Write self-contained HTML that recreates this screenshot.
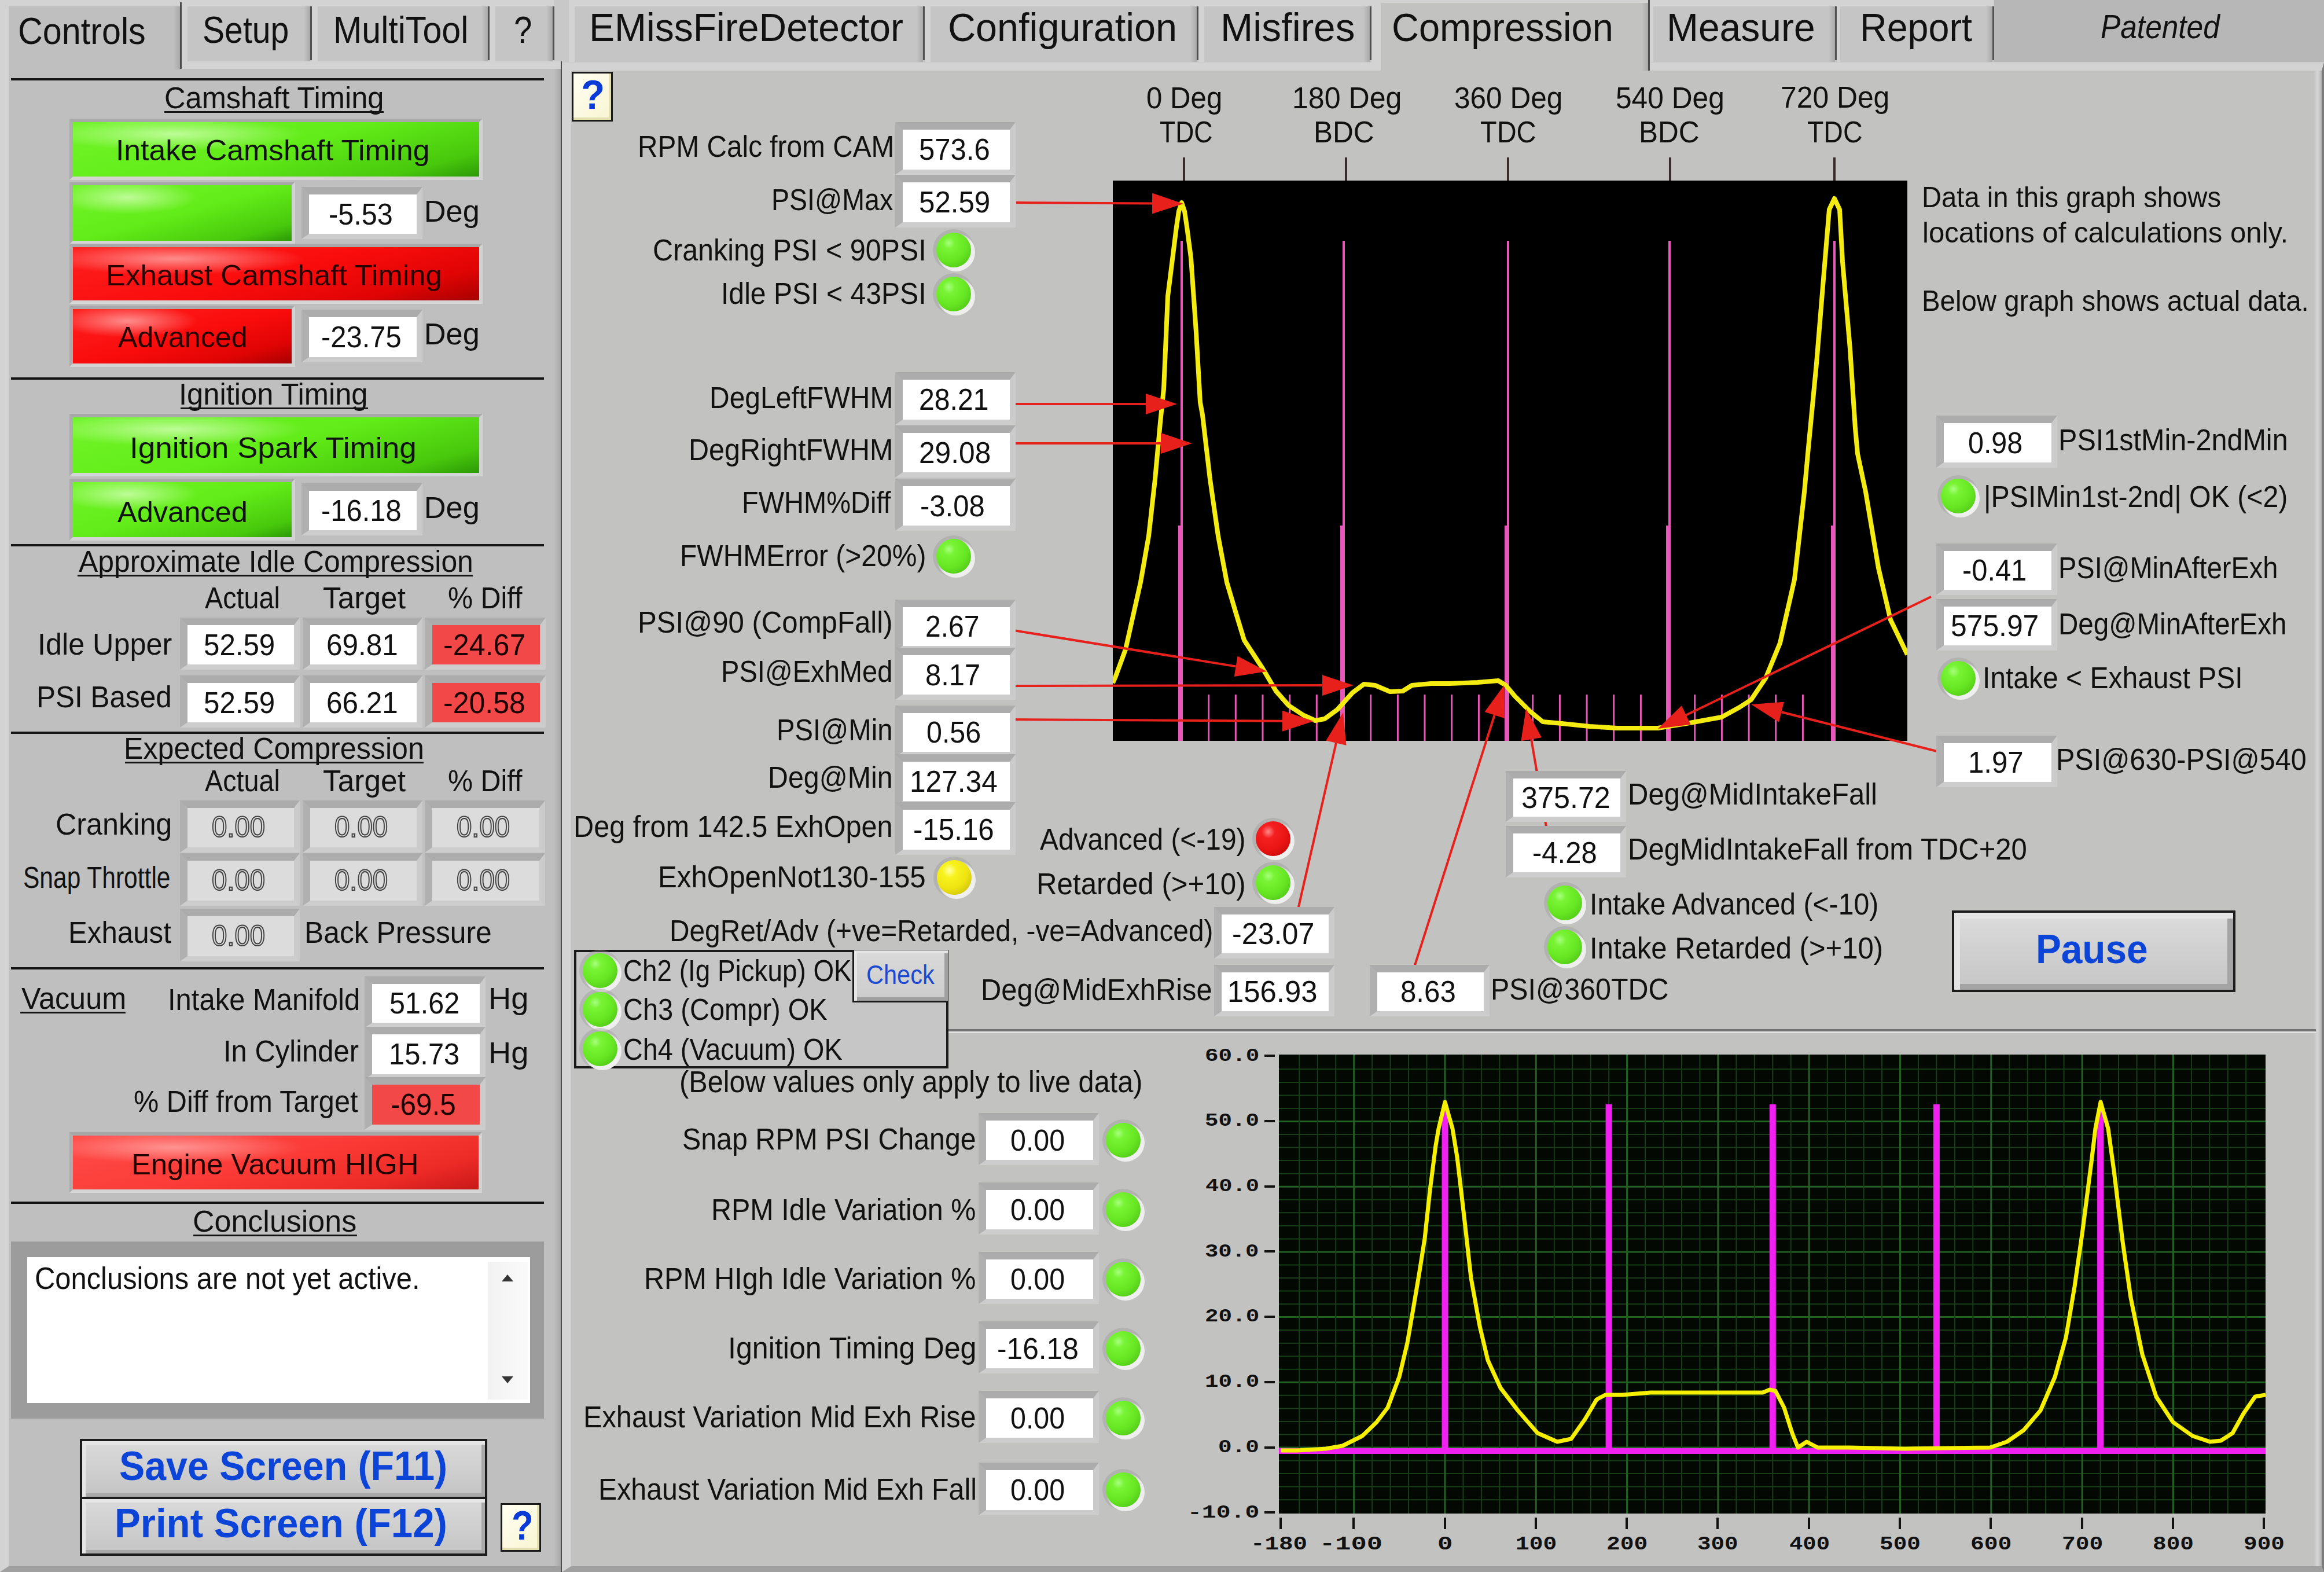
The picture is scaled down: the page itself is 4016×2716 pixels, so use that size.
<!DOCTYPE html>
<html><head><meta charset="utf-8"><style>
html,body{margin:0;padding:0;}
body{width:4016px;height:2716px;overflow:hidden;position:relative;background:#c2c2c1;font-family:"Liberation Sans",sans-serif;}
div,span,svg{position:absolute;box-sizing:border-box;}
span{white-space:pre;line-height:1;}
</style></head><body>
<div style="left:0px;top:0px;width:4016px;height:108px;background:#c8c8c8;"></div>
<div style="left:3446px;top:0px;width:570px;height:107px;background:#b7b7b7;"></div>
<div style="left:314px;top:0px;width:225px;height:107px;background:#c5c5c5;border-top:11px solid #d3d3d3;border-left:10px solid #d3d3d3;"></div>
<div style="left:525px;top:11px;width:11px;height:96px;background:linear-gradient(90deg,rgba(160,160,160,0),rgba(150,150,150,.6));"></div>
<div style="left:536px;top:11px;width:3px;height:93px;background:#505050;"></div>
<div style="left:539px;top:0px;width:307px;height:107px;background:#c5c5c5;border-top:11px solid #d3d3d3;border-left:10px solid #d3d3d3;"></div>
<div style="left:832px;top:11px;width:11px;height:96px;background:linear-gradient(90deg,rgba(160,160,160,0),rgba(150,150,150,.6));"></div>
<div style="left:843px;top:11px;width:3px;height:93px;background:#505050;"></div>
<div style="left:846px;top:0px;width:112px;height:107px;background:#c5c5c5;border-top:11px solid #d3d3d3;border-left:10px solid #d3d3d3;"></div>
<div style="left:944px;top:11px;width:11px;height:96px;background:linear-gradient(90deg,rgba(160,160,160,0),rgba(150,150,150,.6));"></div>
<div style="left:955px;top:11px;width:3px;height:93px;background:#505050;"></div>
<div style="left:983px;top:0px;width:615px;height:107px;background:#c5c5c5;border-top:11px solid #d3d3d3;border-left:10px solid #d3d3d3;"></div>
<div style="left:1584px;top:11px;width:11px;height:96px;background:linear-gradient(90deg,rgba(160,160,160,0),rgba(150,150,150,.6));"></div>
<div style="left:1595px;top:11px;width:3px;height:93px;background:#505050;"></div>
<div style="left:1598px;top:0px;width:473px;height:107px;background:#c5c5c5;border-top:11px solid #d3d3d3;border-left:10px solid #d3d3d3;"></div>
<div style="left:2057px;top:11px;width:11px;height:96px;background:linear-gradient(90deg,rgba(160,160,160,0),rgba(150,150,150,.6));"></div>
<div style="left:2068px;top:11px;width:3px;height:93px;background:#505050;"></div>
<div style="left:2071px;top:0px;width:299px;height:107px;background:#c5c5c5;border-top:11px solid #d3d3d3;border-left:10px solid #d3d3d3;"></div>
<div style="left:2356px;top:11px;width:11px;height:96px;background:linear-gradient(90deg,rgba(160,160,160,0),rgba(150,150,150,.6));"></div>
<div style="left:2367px;top:11px;width:3px;height:93px;background:#505050;"></div>
<div style="left:2851px;top:0px;width:323px;height:107px;background:#c5c5c5;border-top:11px solid #d3d3d3;border-left:6px solid #d3d3d3;"></div>
<div style="left:3160px;top:11px;width:11px;height:96px;background:linear-gradient(90deg,rgba(160,160,160,0),rgba(150,150,150,.6));"></div>
<div style="left:3171px;top:11px;width:3px;height:93px;background:#505050;"></div>
<div style="left:3174px;top:0px;width:272px;height:107px;background:#c5c5c5;border-top:11px solid #d3d3d3;border-left:6px solid #d3d3d3;"></div>
<div style="left:3432px;top:11px;width:11px;height:96px;background:linear-gradient(90deg,rgba(160,160,160,0),rgba(150,150,150,.6));"></div>
<div style="left:3443px;top:11px;width:3px;height:93px;background:#505050;"></div>
<div style="left:0px;top:106px;width:971px;height:2610px;background:#bfbfbf;border-top:13px solid #d3d3d3;border-left:15px solid #d3d3d3;border-bottom:10px solid #a0a0a0;"></div>
<div style="left:957px;top:119px;width:12px;height:2587px;background:linear-gradient(90deg,rgba(150,150,150,0),rgba(150,150,150,.55));"></div>
<div style="left:969px;top:106px;width:2px;height:2610px;background:#4c4c4c;"></div>
<div style="left:0px;top:0px;width:314px;height:120px;background:#bfbfbf;border-top:11px solid #d3d3d3;border-left:15px solid #d3d3d3;"></div>
<div style="left:15px;top:106px;width:299px;height:14px;background:#bfbfbf;"></div>
<div style="left:300px;top:11px;width:11px;height:109px;background:linear-gradient(90deg,rgba(150,150,150,0),rgba(150,150,150,.55));"></div>
<div style="left:311px;top:4px;width:3px;height:115px;background:#4c4c4c;"></div>
<div style="left:971px;top:108px;width:3045px;height:2608px;background:#c2c2c1;border-top:14px solid #d3d3d3;border-left:16px solid #d3d3d3;border-right:4px solid #7c7c7c;border-bottom:10px solid #a0a0a0;"></div>
<div style="left:3998px;top:122px;width:14px;height:2584px;background:linear-gradient(90deg,rgba(210,210,210,0),#d6d6d6 50%,#b4b4b4);"></div>
<div style="left:2370px;top:0px;width:481px;height:122px;background:#c2c2c1;border-top:5px solid #d3d3d3;border-left:16px solid #d3d3d3;"></div>
<div style="left:2386px;top:108px;width:465px;height:16px;background:#c2c2c1;"></div>
<div style="left:2837px;top:5px;width:11px;height:117px;background:linear-gradient(90deg,rgba(150,150,150,0),rgba(150,150,150,.55));"></div>
<div style="left:2848px;top:0px;width:3px;height:122px;background:#4c4c4c;"></div>
<svg style="left:1923px;top:312px" width="1373" height="968" viewBox="0 0 1373 968"><rect x="0" y="0" width="1373" height="968" fill="#000"/><line x1="119" y1="104" x2="119" y2="968" stroke="#e858b8" stroke-width="4"/><line x1="117" y1="596" x2="117" y2="968" stroke="#e858b8" stroke-width="8"/><line x1="399" y1="104" x2="399" y2="968" stroke="#e858b8" stroke-width="4"/><line x1="397" y1="596" x2="397" y2="968" stroke="#e858b8" stroke-width="8"/><line x1="683" y1="104" x2="683" y2="968" stroke="#e858b8" stroke-width="4"/><line x1="681" y1="596" x2="681" y2="968" stroke="#e858b8" stroke-width="8"/><line x1="962" y1="104" x2="962" y2="968" stroke="#e858b8" stroke-width="4"/><line x1="960" y1="596" x2="960" y2="968" stroke="#e858b8" stroke-width="8"/><line x1="1247" y1="104" x2="1247" y2="968" stroke="#e858b8" stroke-width="4"/><line x1="1245" y1="596" x2="1245" y2="968" stroke="#e858b8" stroke-width="8"/><line x1="165.7" y1="888" x2="165.7" y2="968" stroke="#e858b8" stroke-width="3"/><line x1="212.3" y1="888" x2="212.3" y2="968" stroke="#e858b8" stroke-width="3"/><line x1="259.0" y1="888" x2="259.0" y2="968" stroke="#e858b8" stroke-width="3"/><line x1="305.7" y1="888" x2="305.7" y2="968" stroke="#e858b8" stroke-width="3"/><line x1="352.3" y1="888" x2="352.3" y2="968" stroke="#e858b8" stroke-width="3"/><line x1="445.7" y1="888" x2="445.7" y2="968" stroke="#e858b8" stroke-width="3"/><line x1="492.4" y1="888" x2="492.4" y2="968" stroke="#e858b8" stroke-width="3"/><line x1="539.0" y1="888" x2="539.0" y2="968" stroke="#e858b8" stroke-width="3"/><line x1="585.7" y1="888" x2="585.7" y2="968" stroke="#e858b8" stroke-width="3"/><line x1="632.4" y1="888" x2="632.4" y2="968" stroke="#e858b8" stroke-width="3"/><line x1="725.7" y1="888" x2="725.7" y2="968" stroke="#e858b8" stroke-width="3"/><line x1="772.4" y1="888" x2="772.4" y2="968" stroke="#e858b8" stroke-width="3"/><line x1="819.1" y1="888" x2="819.1" y2="968" stroke="#e858b8" stroke-width="3"/><line x1="865.7" y1="888" x2="865.7" y2="968" stroke="#e858b8" stroke-width="3"/><line x1="912.4" y1="888" x2="912.4" y2="968" stroke="#e858b8" stroke-width="3"/><line x1="1005.7" y1="888" x2="1005.7" y2="968" stroke="#e858b8" stroke-width="3"/><line x1="1052.4" y1="888" x2="1052.4" y2="968" stroke="#e858b8" stroke-width="3"/><line x1="1099.1" y1="888" x2="1099.1" y2="968" stroke="#e858b8" stroke-width="3"/><line x1="1145.7" y1="888" x2="1145.7" y2="968" stroke="#e858b8" stroke-width="3"/><line x1="1192.4" y1="888" x2="1192.4" y2="968" stroke="#e858b8" stroke-width="3"/><polyline points="0,868 4,859 22,810 35,752 48,694 62,614 73,516 82,418 88,360 95,200 110,80 114,53 119,38 124,53 128,80 135,133 144,262 151,383 155,405 168,516 182,614 197,694 213,748 227,794 259,843 282,882 304,907 330,924 350,933 366,930 388,914 414,885 434,870 453,872 479,883 501,882 517,872 550,869 582,869 630,867 666,864 679,872 695,891 721,917 743,935 776,938 824,943 872,946 942,946 997,937 1052,927 1083,910 1103,897 1128,860 1153,799 1178,689 1195,538 1201,472 1216,316 1228,170 1238,50 1247,31 1256,50 1261,140 1274,291 1283,428 1287,472 1301,538 1323,669 1344,759 1373,819" fill="none" stroke="#f4ec10" stroke-width="8" stroke-linejoin="round"/></svg>
<div style="left:2044px;top:272px;width:4px;height:40px;background:#3a2a2a;"></div>
<div style="left:2324px;top:272px;width:4px;height:40px;background:#3a2a2a;"></div>
<div style="left:2604px;top:272px;width:4px;height:40px;background:#3a2a2a;"></div>
<div style="left:2884px;top:272px;width:4px;height:40px;background:#3a2a2a;"></div>
<div style="left:3168px;top:272px;width:4px;height:40px;background:#3a2a2a;"></div>
<span style="left:1980.5px;top:142.5px;font-family:'Liberation Sans';font-size:52.33px;font-weight:normal;font-style:normal;color:#111;transform:scaleX(0.9399);transform-origin:0 0;">0 Deg</span>
<span style="left:2004.1px;top:201.5px;font-family:'Liberation Sans';font-size:52.33px;font-weight:normal;font-style:normal;color:#111;transform:scaleX(0.8492);transform-origin:0 0;">TDC</span>
<span style="left:2232.5px;top:142.5px;font-family:'Liberation Sans';font-size:52.33px;font-weight:normal;font-style:normal;color:#111;transform:scaleX(0.9570);transform-origin:0 0;">180 Deg</span>
<span style="left:2270.0px;top:201.5px;font-family:'Liberation Sans';font-size:52.33px;font-weight:normal;font-style:normal;color:#111;transform:scaleX(0.9464);transform-origin:0 0;">BDC</span>
<span style="left:2512.5px;top:142.5px;font-family:'Liberation Sans';font-size:52.33px;font-weight:normal;font-style:normal;color:#111;transform:scaleX(0.9466);transform-origin:0 0;">360 Deg</span>
<span style="left:2558.1px;top:201.5px;font-family:'Liberation Sans';font-size:52.33px;font-weight:normal;font-style:normal;color:#111;transform:scaleX(0.8969);transform-origin:0 0;">TDC</span>
<span style="left:2792.0px;top:142.5px;font-family:'Liberation Sans';font-size:52.33px;font-weight:normal;font-style:normal;color:#111;transform:scaleX(0.9492);transform-origin:0 0;">540 Deg</span>
<span style="left:2832.0px;top:201.5px;font-family:'Liberation Sans';font-size:52.33px;font-weight:normal;font-style:normal;color:#111;transform:scaleX(0.9464);transform-origin:0 0;">BDC</span>
<span style="left:3076.5px;top:141.5px;font-family:'Liberation Sans';font-size:52.33px;font-weight:normal;font-style:normal;color:#111;transform:scaleX(0.9518);transform-origin:0 0;">720 Deg</span>
<span style="left:3123.1px;top:201.5px;font-family:'Liberation Sans';font-size:52.33px;font-weight:normal;font-style:normal;color:#111;transform:scaleX(0.8873);transform-origin:0 0;">TDC</span>
<span style="left:3321.2px;top:315.8px;font-family:'Liberation Sans';font-size:50.87px;font-weight:normal;font-style:normal;color:#111;transform:scaleX(0.9284);transform-origin:0 0;">Data in this graph shows</span>
<span style="left:3322.1px;top:376.8px;font-family:'Liberation Sans';font-size:50.87px;font-weight:normal;font-style:normal;color:#111;transform:scaleX(0.9651);transform-origin:0 0;">locations of calculations only.</span>
<span style="left:3321.2px;top:494.8px;font-family:'Liberation Sans';font-size:50.87px;font-weight:normal;font-style:normal;color:#111;transform:scaleX(0.9313);transform-origin:0 0;">Below graph shows actual data.</span>
<svg style="left:2210px;top:1822px" width="1705" height="793" viewBox="2210 1822 1705 793"><rect x="2210" y="1822" width="1705" height="793" fill="#030803"/><line x1="2210" y1="2591.2" x2="3915" y2="2591.2" stroke="#173e17" stroke-width="2"/><line x1="2210" y1="2568.6" x2="3915" y2="2568.6" stroke="#173e17" stroke-width="2"/><line x1="2210" y1="2546.1" x2="3915" y2="2546.1" stroke="#173e17" stroke-width="2"/><line x1="2210" y1="2523.5" x2="3915" y2="2523.5" stroke="#173e17" stroke-width="2"/><line x1="2210" y1="2501.0" x2="3915" y2="2501.0" stroke="#246024" stroke-width="3"/><line x1="2210" y1="2478.5" x2="3915" y2="2478.5" stroke="#173e17" stroke-width="2"/><line x1="2210" y1="2455.9" x2="3915" y2="2455.9" stroke="#173e17" stroke-width="2"/><line x1="2210" y1="2433.4" x2="3915" y2="2433.4" stroke="#173e17" stroke-width="2"/><line x1="2210" y1="2410.8" x2="3915" y2="2410.8" stroke="#173e17" stroke-width="2"/><line x1="2210" y1="2388.3" x2="3915" y2="2388.3" stroke="#246024" stroke-width="3"/><line x1="2210" y1="2365.8" x2="3915" y2="2365.8" stroke="#173e17" stroke-width="2"/><line x1="2210" y1="2343.2" x2="3915" y2="2343.2" stroke="#173e17" stroke-width="2"/><line x1="2210" y1="2320.7" x2="3915" y2="2320.7" stroke="#173e17" stroke-width="2"/><line x1="2210" y1="2298.1" x2="3915" y2="2298.1" stroke="#173e17" stroke-width="2"/><line x1="2210" y1="2275.6" x2="3915" y2="2275.6" stroke="#246024" stroke-width="3"/><line x1="2210" y1="2253.1" x2="3915" y2="2253.1" stroke="#173e17" stroke-width="2"/><line x1="2210" y1="2230.5" x2="3915" y2="2230.5" stroke="#173e17" stroke-width="2"/><line x1="2210" y1="2208.0" x2="3915" y2="2208.0" stroke="#173e17" stroke-width="2"/><line x1="2210" y1="2185.4" x2="3915" y2="2185.4" stroke="#173e17" stroke-width="2"/><line x1="2210" y1="2162.9" x2="3915" y2="2162.9" stroke="#246024" stroke-width="3"/><line x1="2210" y1="2140.4" x2="3915" y2="2140.4" stroke="#173e17" stroke-width="2"/><line x1="2210" y1="2117.8" x2="3915" y2="2117.8" stroke="#173e17" stroke-width="2"/><line x1="2210" y1="2095.3" x2="3915" y2="2095.3" stroke="#173e17" stroke-width="2"/><line x1="2210" y1="2072.7" x2="3915" y2="2072.7" stroke="#173e17" stroke-width="2"/><line x1="2210" y1="2050.2" x2="3915" y2="2050.2" stroke="#246024" stroke-width="3"/><line x1="2210" y1="2027.7" x2="3915" y2="2027.7" stroke="#173e17" stroke-width="2"/><line x1="2210" y1="2005.1" x2="3915" y2="2005.1" stroke="#173e17" stroke-width="2"/><line x1="2210" y1="1982.6" x2="3915" y2="1982.6" stroke="#173e17" stroke-width="2"/><line x1="2210" y1="1960.0" x2="3915" y2="1960.0" stroke="#173e17" stroke-width="2"/><line x1="2210" y1="1937.5" x2="3915" y2="1937.5" stroke="#246024" stroke-width="3"/><line x1="2210" y1="1915.0" x2="3915" y2="1915.0" stroke="#173e17" stroke-width="2"/><line x1="2210" y1="1892.4" x2="3915" y2="1892.4" stroke="#173e17" stroke-width="2"/><line x1="2210" y1="1869.9" x2="3915" y2="1869.9" stroke="#173e17" stroke-width="2"/><line x1="2210" y1="1847.3" x2="3915" y2="1847.3" stroke="#173e17" stroke-width="2"/><line x1="2245.3" y1="1822" x2="2245.3" y2="2615" stroke="#173e17" stroke-width="2"/><line x1="2276.8" y1="1822" x2="2276.8" y2="2615" stroke="#173e17" stroke-width="2"/><line x1="2308.2" y1="1822" x2="2308.2" y2="2615" stroke="#173e17" stroke-width="2"/><line x1="2339.7" y1="1822" x2="2339.7" y2="2615" stroke="#246024" stroke-width="3"/><line x1="2371.2" y1="1822" x2="2371.2" y2="2615" stroke="#173e17" stroke-width="2"/><line x1="2402.6" y1="1822" x2="2402.6" y2="2615" stroke="#173e17" stroke-width="2"/><line x1="2434.1" y1="1822" x2="2434.1" y2="2615" stroke="#173e17" stroke-width="2"/><line x1="2465.5" y1="1822" x2="2465.5" y2="2615" stroke="#173e17" stroke-width="2"/><line x1="2497.0" y1="1822" x2="2497.0" y2="2615" stroke="#246024" stroke-width="3"/><line x1="2528.5" y1="1822" x2="2528.5" y2="2615" stroke="#173e17" stroke-width="2"/><line x1="2559.9" y1="1822" x2="2559.9" y2="2615" stroke="#173e17" stroke-width="2"/><line x1="2591.4" y1="1822" x2="2591.4" y2="2615" stroke="#173e17" stroke-width="2"/><line x1="2622.8" y1="1822" x2="2622.8" y2="2615" stroke="#173e17" stroke-width="2"/><line x1="2654.3" y1="1822" x2="2654.3" y2="2615" stroke="#246024" stroke-width="3"/><line x1="2685.8" y1="1822" x2="2685.8" y2="2615" stroke="#173e17" stroke-width="2"/><line x1="2717.2" y1="1822" x2="2717.2" y2="2615" stroke="#173e17" stroke-width="2"/><line x1="2748.7" y1="1822" x2="2748.7" y2="2615" stroke="#173e17" stroke-width="2"/><line x1="2780.1" y1="1822" x2="2780.1" y2="2615" stroke="#173e17" stroke-width="2"/><line x1="2811.6" y1="1822" x2="2811.6" y2="2615" stroke="#246024" stroke-width="3"/><line x1="2843.1" y1="1822" x2="2843.1" y2="2615" stroke="#173e17" stroke-width="2"/><line x1="2874.5" y1="1822" x2="2874.5" y2="2615" stroke="#173e17" stroke-width="2"/><line x1="2906.0" y1="1822" x2="2906.0" y2="2615" stroke="#173e17" stroke-width="2"/><line x1="2937.4" y1="1822" x2="2937.4" y2="2615" stroke="#173e17" stroke-width="2"/><line x1="2968.9" y1="1822" x2="2968.9" y2="2615" stroke="#246024" stroke-width="3"/><line x1="3000.4" y1="1822" x2="3000.4" y2="2615" stroke="#173e17" stroke-width="2"/><line x1="3031.8" y1="1822" x2="3031.8" y2="2615" stroke="#173e17" stroke-width="2"/><line x1="3063.3" y1="1822" x2="3063.3" y2="2615" stroke="#173e17" stroke-width="2"/><line x1="3094.7" y1="1822" x2="3094.7" y2="2615" stroke="#173e17" stroke-width="2"/><line x1="3126.2" y1="1822" x2="3126.2" y2="2615" stroke="#246024" stroke-width="3"/><line x1="3157.7" y1="1822" x2="3157.7" y2="2615" stroke="#173e17" stroke-width="2"/><line x1="3189.1" y1="1822" x2="3189.1" y2="2615" stroke="#173e17" stroke-width="2"/><line x1="3220.6" y1="1822" x2="3220.6" y2="2615" stroke="#173e17" stroke-width="2"/><line x1="3252.0" y1="1822" x2="3252.0" y2="2615" stroke="#173e17" stroke-width="2"/><line x1="3283.5" y1="1822" x2="3283.5" y2="2615" stroke="#246024" stroke-width="3"/><line x1="3315.0" y1="1822" x2="3315.0" y2="2615" stroke="#173e17" stroke-width="2"/><line x1="3346.4" y1="1822" x2="3346.4" y2="2615" stroke="#173e17" stroke-width="2"/><line x1="3377.9" y1="1822" x2="3377.9" y2="2615" stroke="#173e17" stroke-width="2"/><line x1="3409.3" y1="1822" x2="3409.3" y2="2615" stroke="#173e17" stroke-width="2"/><line x1="3440.8" y1="1822" x2="3440.8" y2="2615" stroke="#246024" stroke-width="3"/><line x1="3472.3" y1="1822" x2="3472.3" y2="2615" stroke="#173e17" stroke-width="2"/><line x1="3503.7" y1="1822" x2="3503.7" y2="2615" stroke="#173e17" stroke-width="2"/><line x1="3535.2" y1="1822" x2="3535.2" y2="2615" stroke="#173e17" stroke-width="2"/><line x1="3566.6" y1="1822" x2="3566.6" y2="2615" stroke="#173e17" stroke-width="2"/><line x1="3598.1" y1="1822" x2="3598.1" y2="2615" stroke="#246024" stroke-width="3"/><line x1="3629.6" y1="1822" x2="3629.6" y2="2615" stroke="#173e17" stroke-width="2"/><line x1="3661.0" y1="1822" x2="3661.0" y2="2615" stroke="#173e17" stroke-width="2"/><line x1="3692.5" y1="1822" x2="3692.5" y2="2615" stroke="#173e17" stroke-width="2"/><line x1="3723.9" y1="1822" x2="3723.9" y2="2615" stroke="#173e17" stroke-width="2"/><line x1="3755.4" y1="1822" x2="3755.4" y2="2615" stroke="#246024" stroke-width="3"/><line x1="3786.9" y1="1822" x2="3786.9" y2="2615" stroke="#173e17" stroke-width="2"/><line x1="3818.3" y1="1822" x2="3818.3" y2="2615" stroke="#173e17" stroke-width="2"/><line x1="3849.8" y1="1822" x2="3849.8" y2="2615" stroke="#173e17" stroke-width="2"/><line x1="3881.2" y1="1822" x2="3881.2" y2="2615" stroke="#173e17" stroke-width="2"/><line x1="2210" y1="2507" x2="3915" y2="2507" stroke="#f020f0" stroke-width="10"/><line x1="2497.0" y1="1919" x2="2497.0" y2="2507" stroke="#f020f0" stroke-width="11"/><line x1="2780.1" y1="1908" x2="2780.1" y2="2507" stroke="#f020f0" stroke-width="11"/><line x1="3063.3" y1="1908" x2="3063.3" y2="2507" stroke="#f020f0" stroke-width="11"/><line x1="3346.4" y1="1908" x2="3346.4" y2="2507" stroke="#f020f0" stroke-width="11"/><line x1="3629.6" y1="1919" x2="3629.6" y2="2507" stroke="#f020f0" stroke-width="11"/><polyline points="2213,2506 2242,2506 2291,2503 2320,2498 2354,2481 2379,2457 2398,2432 2418,2379 2432,2320 2442,2262 2452,2203 2462,2140 2471,2057 2481,1979 2486,1950 2497,1904 2510,1950 2518,1999 2530,2101 2542,2208 2557,2291 2571,2350 2593,2398 2623,2437 2657,2476 2691,2491 2715,2486 2739,2452 2759,2418 2774,2410 2803,2410 2852,2406 3046,2406 3058,2401 3068,2403 3083,2432 3097,2476 3107,2501 3122,2491 3141,2501 3195,2501 3292,2503 3439,2501 3468,2491 3497,2471 3526,2437 3551,2379 3570,2311 3585,2223 3599,2125 3614,2008 3621,1950 3630,1904 3643,1950 3653,2023 3668,2145 3682,2242 3702,2340 3726,2413 3755,2457 3789,2481 3819,2491 3838,2489 3858,2476 3877,2442 3897,2413 3915,2410" fill="none" stroke="#f6f000" stroke-width="7" stroke-linejoin="round"/></svg>
<span style="left:2051.8px;top:2597.5px;font-family:'Liberation Mono';font-size:31.98px;font-weight:bold;font-style:normal;color:#111;transform:scaleX(1.2954);transform-origin:0 0;">-10.0</span>
<div style="left:2185px;top:2611px;width:18px;height:4px;background:#111;"></div>
<span style="left:2105.0px;top:2484.8px;font-family:'Liberation Mono';font-size:31.98px;font-weight:bold;font-style:normal;color:#111;transform:scaleX(1.2324);transform-origin:0 0;">0.0</span>
<div style="left:2185px;top:2499px;width:18px;height:4px;background:#111;"></div>
<span style="left:2081.6px;top:2372.1px;font-family:'Liberation Mono';font-size:31.98px;font-weight:bold;font-style:normal;color:#111;transform:scaleX(1.2289);transform-origin:0 0;">10.0</span>
<div style="left:2185px;top:2386px;width:18px;height:4px;background:#111;"></div>
<span style="left:2081.6px;top:2259.4px;font-family:'Liberation Mono';font-size:31.98px;font-weight:bold;font-style:normal;color:#111;transform:scaleX(1.2289);transform-origin:0 0;">20.0</span>
<div style="left:2185px;top:2273px;width:18px;height:4px;background:#111;"></div>
<span style="left:2082.4px;top:2146.7px;font-family:'Liberation Mono';font-size:31.98px;font-weight:bold;font-style:normal;color:#111;transform:scaleX(1.2183);transform-origin:0 0;">30.0</span>
<div style="left:2185px;top:2160px;width:18px;height:4px;background:#111;"></div>
<span style="left:2082.8px;top:2034.0px;font-family:'Liberation Mono';font-size:31.98px;font-weight:bold;font-style:normal;color:#111;transform:scaleX(1.2130);transform-origin:0 0;">40.0</span>
<div style="left:2185px;top:2048px;width:18px;height:4px;background:#111;"></div>
<span style="left:2082.0px;top:1921.3px;font-family:'Liberation Mono';font-size:31.98px;font-weight:bold;font-style:normal;color:#111;transform:scaleX(1.2236);transform-origin:0 0;">50.0</span>
<div style="left:2185px;top:1935px;width:18px;height:4px;background:#111;"></div>
<span style="left:2081.6px;top:1808.6px;font-family:'Liberation Mono';font-size:31.98px;font-weight:bold;font-style:normal;color:#111;transform:scaleX(1.2289);transform-origin:0 0;">60.0</span>
<div style="left:2185px;top:1822px;width:18px;height:4px;background:#111;"></div>
<div style="left:2211px;top:2622px;width:4px;height:20px;background:#111;"></div>
<span style="left:2160.9px;top:2651.6px;font-family:'Liberation Mono';font-size:33.43px;font-weight:bold;font-style:normal;color:#111;transform:scaleX(1.2236);transform-origin:0 0;">-180</span>
<div style="left:2337px;top:2622px;width:4px;height:20px;background:#111;"></div>
<span style="left:2280.2px;top:2651.6px;font-family:'Liberation Mono';font-size:33.43px;font-weight:bold;font-style:normal;color:#111;transform:scaleX(1.3595);transform-origin:0 0;">-100</span>
<div style="left:2495px;top:2622px;width:4px;height:20px;background:#111;"></div>
<span style="left:2483.8px;top:2651.6px;font-family:'Liberation Mono';font-size:33.43px;font-weight:bold;font-style:normal;color:#111;transform:scaleX(1.3162);transform-origin:0 0;">0</span>
<div style="left:2652px;top:2622px;width:4px;height:20px;background:#111;"></div>
<span style="left:2618.6px;top:2651.6px;font-family:'Liberation Mono';font-size:33.43px;font-weight:bold;font-style:normal;color:#111;transform:scaleX(1.1858);transform-origin:0 0;">100</span>
<div style="left:2809px;top:2622px;width:4px;height:20px;background:#111;"></div>
<span style="left:2775.6px;top:2651.6px;font-family:'Liberation Mono';font-size:33.43px;font-weight:bold;font-style:normal;color:#111;transform:scaleX(1.1858);transform-origin:0 0;">200</span>
<div style="left:2966px;top:2622px;width:4px;height:20px;background:#111;"></div>
<span style="left:2933.4px;top:2651.6px;font-family:'Liberation Mono';font-size:33.43px;font-weight:bold;font-style:normal;color:#111;transform:scaleX(1.1719);transform-origin:0 0;">300</span>
<div style="left:3124px;top:2622px;width:4px;height:20px;background:#111;"></div>
<span style="left:3091.8px;top:2651.6px;font-family:'Liberation Mono';font-size:33.43px;font-weight:bold;font-style:normal;color:#111;transform:scaleX(1.1651);transform-origin:0 0;">400</span>
<div style="left:3281px;top:2622px;width:4px;height:20px;background:#111;"></div>
<span style="left:3248.0px;top:2651.6px;font-family:'Liberation Mono';font-size:33.43px;font-weight:bold;font-style:normal;color:#111;transform:scaleX(1.1788);transform-origin:0 0;">500</span>
<div style="left:3438px;top:2622px;width:4px;height:20px;background:#111;"></div>
<span style="left:3404.6px;top:2651.6px;font-family:'Liberation Mono';font-size:33.43px;font-weight:bold;font-style:normal;color:#111;transform:scaleX(1.1858);transform-origin:0 0;">600</span>
<div style="left:3596px;top:2622px;width:4px;height:20px;background:#111;"></div>
<span style="left:3562.6px;top:2651.6px;font-family:'Liberation Mono';font-size:33.43px;font-weight:bold;font-style:normal;color:#111;transform:scaleX(1.1858);transform-origin:0 0;">700</span>
<div style="left:3753px;top:2622px;width:4px;height:20px;background:#111;"></div>
<span style="left:3720.0px;top:2651.6px;font-family:'Liberation Mono';font-size:33.43px;font-weight:bold;font-style:normal;color:#111;transform:scaleX(1.1788);transform-origin:0 0;">800</span>
<div style="left:3910px;top:2622px;width:4px;height:20px;background:#111;"></div>
<span style="left:3877.0px;top:2651.6px;font-family:'Liberation Mono';font-size:33.43px;font-weight:bold;font-style:normal;color:#111;transform:scaleX(1.1788);transform-origin:0 0;">900</span>
<svg style="left:0px;top:0px" width="4016" height="2716" viewBox="0 0 4016 2716"><line x1="1756" y1="350" x2="1991.0" y2="351.6" stroke="#e8201c" stroke-width="4"/><polygon points="2045,352 1990.9,369.6 1991.1,333.6" fill="#e8201c"/><line x1="1745" y1="698" x2="1980.0" y2="698.0" stroke="#e8201c" stroke-width="4"/><polygon points="2034,698 1980.0,716.0 1980.0,680.0" fill="#e8201c"/><line x1="1745" y1="766" x2="2006.0" y2="766.0" stroke="#e8201c" stroke-width="4"/><polygon points="2060,766 2006.0,784.0 2006.0,748.0" fill="#e8201c"/><line x1="1745" y1="1088" x2="2135.7" y2="1151.4" stroke="#e8201c" stroke-width="4"/><polygon points="2189,1160 2132.8,1169.1 2138.6,1133.6" fill="#e8201c"/><line x1="1745" y1="1185" x2="2285.0" y2="1184.1" stroke="#e8201c" stroke-width="4"/><polygon points="2339,1184 2285.0,1202.1 2285.0,1166.1" fill="#e8201c"/><line x1="1745" y1="1243" x2="2216.0" y2="1245.7" stroke="#e8201c" stroke-width="4"/><polygon points="2270,1246 2215.9,1263.7 2216.1,1227.7" fill="#e8201c"/><line x1="2241" y1="1580" x2="2308.9" y2="1283.6" stroke="#e8201c" stroke-width="4"/><polygon points="2321,1231 2326.5,1287.7 2291.4,1279.6" fill="#e8201c"/><line x1="2441" y1="1680" x2="2582.6" y2="1235.5" stroke="#e8201c" stroke-width="4"/><polygon points="2599,1184 2599.8,1240.9 2565.5,1230.0" fill="#e8201c"/><line x1="2674" y1="1440" x2="2646.1" y2="1277.2" stroke="#e8201c" stroke-width="4"/><polygon points="2637,1224 2663.9,1274.2 2628.4,1280.3" fill="#e8201c"/><line x1="3337" y1="1031" x2="2913.6" y2="1235.5" stroke="#e8201c" stroke-width="4"/><polygon points="2865,1259 2905.8,1219.3 2921.5,1251.7" fill="#e8201c"/><line x1="3359" y1="1301" x2="3078.4" y2="1230.2" stroke="#e8201c" stroke-width="4"/><polygon points="3026,1217 3082.8,1212.8 3074.0,1247.7" fill="#e8201c"/></svg>
<div style="left:3346px;top:718px;width:209px;height:90px;border-style:solid;border-width:13px 10px 9px 13px;border-color:#acacac #cbcbcb #cdcdcd #b0b0b0;"></div>
<div style="left:3359px;top:731px;width:186px;height:68px;background:#fff;"></div>
<span style="left:3400.5px;top:738.5px;font-family:'Liberation Sans';font-size:52.33px;font-weight:normal;font-style:normal;color:#111;transform:scaleX(0.9250);transform-origin:0 0;">0.98</span>
<span style="left:3557.1px;top:733.5px;font-family:'Liberation Sans';font-size:52.33px;font-weight:normal;font-style:normal;color:#111;transform:scaleX(0.9278);transform-origin:0 0;">PSI1stMin-2ndMin</span>
<div style="left:3348px;top:821px;width:72px;height:72px;border-radius:50%;background:radial-gradient(circle at 40% 40%,rgba(150,150,150,.45) 0%,rgba(150,150,150,.35) 60%,rgba(150,150,150,0) 74%);"></div>
<div style="left:3355px;top:828px;width:66px;height:66px;border-radius:50%;background:radial-gradient(circle at 62% 62%,#f4f4f4 0%,#ececec 55%,rgba(236,236,236,0) 72%);"></div>
<div style="left:3354px;top:827px;width:60px;height:60px;border-radius:50%;background:radial-gradient(circle at 36% 30%,#a8ff80 0%,#78f434 18%,#66e622 55%,#44b810 100%);"></div>
<span style="left:3428.1px;top:831.5px;font-family:'Liberation Sans';font-size:52.33px;font-weight:normal;font-style:normal;color:#111;transform:scaleX(0.9225);transform-origin:0 0;">|PSIMin1st-2nd| OK (&lt;2)</span>
<div style="left:3346px;top:939px;width:209px;height:89px;border-style:solid;border-width:13px 10px 9px 13px;border-color:#acacac #cbcbcb #cdcdcd #b0b0b0;"></div>
<div style="left:3359px;top:952px;width:186px;height:67px;background:#fff;"></div>
<span style="left:3391.0px;top:959.0px;font-family:'Liberation Sans';font-size:52.33px;font-weight:normal;font-style:normal;color:#111;transform:scaleX(0.9324);transform-origin:0 0;">-0.41</span>
<span style="left:3557.2px;top:954.5px;font-family:'Liberation Sans';font-size:52.33px;font-weight:normal;font-style:normal;color:#111;transform:scaleX(0.8981);transform-origin:0 0;">PSI@MinAfterExh</span>
<div style="left:3346px;top:1035px;width:209px;height:89px;border-style:solid;border-width:13px 10px 9px 13px;border-color:#acacac #cbcbcb #cdcdcd #b0b0b0;"></div>
<div style="left:3359px;top:1048px;width:186px;height:67px;background:#fff;"></div>
<span style="left:3371.0px;top:1055.0px;font-family:'Liberation Sans';font-size:52.33px;font-weight:normal;font-style:normal;color:#111;transform:scaleX(0.9516);transform-origin:0 0;">575.97</span>
<span style="left:3557.2px;top:1051.5px;font-family:'Liberation Sans';font-size:52.33px;font-weight:normal;font-style:normal;color:#111;transform:scaleX(0.9087);transform-origin:0 0;">Deg@MinAfterExh</span>
<div style="left:3348px;top:1136px;width:72px;height:72px;border-radius:50%;background:radial-gradient(circle at 40% 40%,rgba(150,150,150,.45) 0%,rgba(150,150,150,.35) 60%,rgba(150,150,150,0) 74%);"></div>
<div style="left:3355px;top:1143px;width:66px;height:66px;border-radius:50%;background:radial-gradient(circle at 62% 62%,#f4f4f4 0%,#ececec 55%,rgba(236,236,236,0) 72%);"></div>
<div style="left:3354px;top:1142px;width:60px;height:60px;border-radius:50%;background:radial-gradient(circle at 36% 30%,#a8ff80 0%,#78f434 18%,#66e622 55%,#44b810 100%);"></div>
<span style="left:3425.7px;top:1144.5px;font-family:'Liberation Sans';font-size:52.33px;font-weight:normal;font-style:normal;color:#111;transform:scaleX(0.9172);transform-origin:0 0;">Intake &lt; Exhaust PSI</span>
<div style="left:3346px;top:1271px;width:209px;height:89px;border-style:solid;border-width:13px 10px 9px 13px;border-color:#acacac #cbcbcb #cdcdcd #b0b0b0;"></div>
<div style="left:3359px;top:1284px;width:186px;height:67px;background:#fff;"></div>
<span style="left:3400.6px;top:1291.0px;font-family:'Liberation Sans';font-size:52.33px;font-weight:normal;font-style:normal;color:#111;transform:scaleX(0.9398);transform-origin:0 0;">1.97</span>
<span style="left:3553.1px;top:1285.5px;font-family:'Liberation Sans';font-size:52.33px;font-weight:normal;font-style:normal;color:#111;transform:scaleX(0.9265);transform-origin:0 0;">PSI@630-PSI@540</span>
<span style="left:31.0px;top:21.4px;font-family:'Liberation Sans';font-size:65.41px;font-weight:normal;font-style:normal;color:#111;transform:scaleX(0.9063);transform-origin:0 0;">Controls</span>
<span style="left:349.7px;top:20.6px;font-family:'Liberation Sans';font-size:63.95px;font-weight:normal;font-style:normal;color:#111;transform:scaleX(0.8936);transform-origin:0 0;">Setup</span>
<span style="left:576.3px;top:20.6px;font-family:'Liberation Sans';font-size:63.95px;font-weight:normal;font-style:normal;color:#111;transform:scaleX(0.9250);transform-origin:0 0;">MultiTool</span>
<span style="left:887.8px;top:20.6px;font-family:'Liberation Sans';font-size:63.95px;font-weight:normal;font-style:normal;color:#111;transform:scaleX(0.8795);transform-origin:0 0;">?</span>
<span style="left:1017.7px;top:12.9px;font-family:'Liberation Sans';font-size:68.31px;font-weight:normal;font-style:normal;color:#111;transform:scaleX(0.9668);transform-origin:0 0;">EMissFireDetector</span>
<span style="left:1637.7px;top:12.9px;font-family:'Liberation Sans';font-size:68.31px;font-weight:normal;font-style:normal;color:#111;transform:scaleX(0.9747);transform-origin:0 0;">Configuration</span>
<span style="left:2108.6px;top:12.9px;font-family:'Liberation Sans';font-size:68.31px;font-weight:normal;font-style:normal;color:#111;transform:scaleX(0.9878);transform-origin:0 0;">Misfires</span>
<span style="left:2404.8px;top:12.9px;font-family:'Liberation Sans';font-size:68.31px;font-weight:normal;font-style:normal;color:#111;transform:scaleX(0.9514);transform-origin:0 0;">Compression</span>
<span style="left:2879.7px;top:12.9px;font-family:'Liberation Sans';font-size:68.31px;font-weight:normal;font-style:normal;color:#111;transform:scaleX(0.9657);transform-origin:0 0;">Measure</span>
<span style="left:3213.8px;top:12.9px;font-family:'Liberation Sans';font-size:68.31px;font-weight:normal;font-style:normal;color:#111;transform:scaleX(0.9463);transform-origin:0 0;">Report</span>
<span style="left:3629.5px;top:16.6px;font-family:'Liberation Sans';font-size:58.14px;font-weight:normal;font-style:italic;color:#111;transform:scaleX(0.8842);transform-origin:0 0;">Patented</span>
<div style="left:19px;top:135px;width:921px;height:4px;background:#141414;"></div>
<div style="left:19px;top:652px;width:921px;height:4px;background:#141414;"></div>
<div style="left:19px;top:940px;width:921px;height:4px;background:#141414;"></div>
<div style="left:19px;top:1264px;width:921px;height:4px;background:#141414;"></div>
<div style="left:19px;top:1671px;width:921px;height:4px;background:#141414;"></div>
<div style="left:19px;top:2076px;width:921px;height:4px;background:#141414;"></div>
<span style="left:283.5px;top:142.5px;font-family:'Liberation Sans';font-size:52.33px;font-weight:normal;font-style:normal;color:#111;transform:scaleX(0.9666);transform-origin:0 0;">Camshaft Timing</span>
<div style="left:284px;top:192px;width:379px;height:3px;background:#141414;"></div>
<div style="left:120px;top:205px;width:714px;height:106px;border-style:solid;border-width:6px;border-color:#a8a8a8 #d2d2d2 #d4d4d4 #acacac;"></div>
<div style="left:126px;top:211px;width:702px;height:94px;background:radial-gradient(ellipse 32% 30% at 25% 22%,rgba(210,255,180,.8),rgba(210,255,180,0) 100%),linear-gradient(165deg,#72f42a 0%,#62ec18 50%,#48c80c 85%,#2c9a06 100%);"></div>
<span style="left:200.4px;top:234.8px;font-family:'Liberation Sans';font-size:50.87px;font-weight:normal;font-style:normal;color:#111;transform:scaleX(1.0154);transform-origin:0 0;">Intake Camshaft Timing</span>
<div style="left:120px;top:314px;width:390px;height:108px;border-style:solid;border-width:6px;border-color:#a8a8a8 #d2d2d2 #d4d4d4 #acacac;"></div>
<div style="left:126px;top:320px;width:378px;height:96px;background:radial-gradient(ellipse 32% 30% at 25% 22%,rgba(210,255,180,.8),rgba(210,255,180,0) 100%),linear-gradient(165deg,#72f42a 0%,#62ec18 50%,#48c80c 85%,#2c9a06 100%);"></div>
<div style="left:521px;top:323px;width:209px;height:90px;border-style:solid;border-width:13px 10px 9px 13px;border-color:#acacac #cbcbcb #cdcdcd #b0b0b0;"></div>
<div style="left:534px;top:336px;width:186px;height:68px;background:#fff;"></div>
<span style="left:568.1px;top:343.5px;font-family:'Liberation Sans';font-size:52.33px;font-weight:normal;font-style:normal;color:#111;transform:scaleX(0.9282);transform-origin:0 0;">-5.53</span>
<span style="left:732.8px;top:338.5px;font-family:'Liberation Sans';font-size:52.33px;font-weight:normal;font-style:normal;color:#111;">Deg</span>
<div style="left:120px;top:421px;width:714px;height:104px;border-style:solid;border-width:6px;border-color:#a8a8a8 #d2d2d2 #d4d4d4 #acacac;"></div>
<div style="left:126px;top:427px;width:702px;height:92px;background:radial-gradient(ellipse 32% 30% at 25% 22%,rgba(255,190,190,.7),rgba(255,190,190,0) 100%),linear-gradient(165deg,#ff2020 0%,#fa0c0c 50%,#e00404 80%,#a80000 100%);"></div>
<span style="left:182.9px;top:450.8px;font-family:'Liberation Sans';font-size:50.87px;font-weight:normal;font-style:normal;color:#2a0000;transform:scaleX(1.0024);transform-origin:0 0;">Exhaust Camshaft Timing</span>
<div style="left:120px;top:528px;width:390px;height:106px;border-style:solid;border-width:6px;border-color:#a8a8a8 #d2d2d2 #d4d4d4 #acacac;"></div>
<div style="left:126px;top:534px;width:378px;height:94px;background:radial-gradient(ellipse 32% 30% at 25% 22%,rgba(255,190,190,.7),rgba(255,190,190,0) 100%),linear-gradient(165deg,#ff2020 0%,#fa0c0c 50%,#e00404 80%,#a80000 100%);"></div>
<span style="left:204.0px;top:557.8px;font-family:'Liberation Sans';font-size:50.87px;font-weight:normal;font-style:normal;color:#2a0000;transform:scaleX(0.9892);transform-origin:0 0;">Advanced</span>
<div style="left:521px;top:535px;width:209px;height:91px;border-style:solid;border-width:13px 10px 9px 13px;border-color:#acacac #cbcbcb #cdcdcd #b0b0b0;"></div>
<div style="left:534px;top:548px;width:186px;height:69px;background:#fff;"></div>
<span style="left:555.0px;top:556.0px;font-family:'Liberation Sans';font-size:52.33px;font-weight:normal;font-style:normal;color:#111;transform:scaleX(0.9350);transform-origin:0 0;">-23.75</span>
<span style="left:732.8px;top:550.5px;font-family:'Liberation Sans';font-size:52.33px;font-weight:normal;font-style:normal;color:#111;">Deg</span>
<span style="left:309.4px;top:654.5px;font-family:'Liberation Sans';font-size:52.33px;font-weight:normal;font-style:normal;color:#111;transform:scaleX(0.9677);transform-origin:0 0;">Ignition Timing</span>
<div style="left:312px;top:704px;width:324px;height:3px;background:#141414;"></div>
<div style="left:120px;top:715px;width:714px;height:108px;border-style:solid;border-width:6px;border-color:#a8a8a8 #d2d2d2 #d4d4d4 #acacac;"></div>
<div style="left:126px;top:721px;width:702px;height:96px;background:radial-gradient(ellipse 32% 30% at 25% 22%,rgba(210,255,180,.8),rgba(210,255,180,0) 100%),linear-gradient(165deg,#72f42a 0%,#62ec18 50%,#48c80c 85%,#2c9a06 100%);"></div>
<span style="left:224.2px;top:748.8px;font-family:'Liberation Sans';font-size:50.87px;font-weight:normal;font-style:normal;color:#111;transform:scaleX(1.0437);transform-origin:0 0;">Ignition Spark Timing</span>
<div style="left:120px;top:827px;width:390px;height:107px;border-style:solid;border-width:6px;border-color:#a8a8a8 #d2d2d2 #d4d4d4 #acacac;"></div>
<div style="left:126px;top:833px;width:378px;height:95px;background:radial-gradient(ellipse 32% 30% at 25% 22%,rgba(210,255,180,.8),rgba(210,255,180,0) 100%),linear-gradient(165deg,#72f42a 0%,#62ec18 50%,#48c80c 85%,#2c9a06 100%);"></div>
<span style="left:203.0px;top:859.8px;font-family:'Liberation Sans';font-size:50.87px;font-weight:normal;font-style:normal;color:#111;transform:scaleX(0.9937);transform-origin:0 0;">Advanced</span>
<div style="left:521px;top:835px;width:209px;height:90px;border-style:solid;border-width:13px 10px 9px 13px;border-color:#acacac #cbcbcb #cdcdcd #b0b0b0;"></div>
<div style="left:534px;top:848px;width:186px;height:68px;background:#fff;"></div>
<span style="left:555.0px;top:855.5px;font-family:'Liberation Sans';font-size:52.33px;font-weight:normal;font-style:normal;color:#111;transform:scaleX(0.9350);transform-origin:0 0;">-16.18</span>
<span style="left:732.8px;top:850.5px;font-family:'Liberation Sans';font-size:52.33px;font-weight:normal;font-style:normal;color:#111;">Deg</span>
<span style="left:136.0px;top:943.5px;font-family:'Liberation Sans';font-size:52.33px;font-weight:normal;font-style:normal;color:#111;transform:scaleX(0.9530);transform-origin:0 0;">Approximate Idle Compression</span>
<div style="left:134px;top:993px;width:683px;height:3px;background:#141414;"></div>
<span style="left:354.0px;top:1006.5px;font-family:'Liberation Sans';font-size:52.33px;font-weight:normal;font-style:normal;color:#111;transform:scaleX(0.8933);transform-origin:0 0;">Actual</span>
<span style="left:558.0px;top:1006.5px;font-family:'Liberation Sans';font-size:52.33px;font-weight:normal;font-style:normal;color:#111;transform:scaleX(0.9827);transform-origin:0 0;">Target</span>
<span style="left:773.5px;top:1006.5px;font-family:'Liberation Sans';font-size:52.33px;font-weight:normal;font-style:normal;color:#111;transform:scaleX(0.9260);transform-origin:0 0;">% Diff</span>
<span style="left:64.5px;top:1086.5px;font-family:'Liberation Sans';font-size:52.33px;font-weight:normal;font-style:normal;color:#111;transform:scaleX(0.9617);transform-origin:0 0;">Idle Upper</span>
<div style="left:311px;top:1067px;width:207px;height:90px;border-style:solid;border-width:13px 10px 9px 13px;border-color:#acacac #cbcbcb #cdcdcd #b0b0b0;"></div>
<div style="left:324px;top:1080px;width:184px;height:68px;background:#fff;"></div>
<span style="left:352.0px;top:1087.5px;font-family:'Liberation Sans';font-size:52.33px;font-weight:normal;font-style:normal;color:#111;transform:scaleX(0.9412);transform-origin:0 0;">52.59</span>
<div style="left:523px;top:1067px;width:207px;height:90px;border-style:solid;border-width:13px 10px 9px 13px;border-color:#acacac #cbcbcb #cdcdcd #b0b0b0;"></div>
<div style="left:536px;top:1080px;width:184px;height:68px;background:#fff;"></div>
<span style="left:563.5px;top:1087.5px;font-family:'Liberation Sans';font-size:52.33px;font-weight:normal;font-style:normal;color:#111;transform:scaleX(0.9451);transform-origin:0 0;">69.81</span>
<div style="left:734px;top:1067px;width:209px;height:90px;border-style:solid;border-width:13px 10px 9px 13px;border-color:#acacac #cbcbcb #cdcdcd #b0b0b0;"></div>
<div style="left:747px;top:1080px;width:186px;height:68px;background:#f24848;"></div>
<span style="left:766.0px;top:1087.5px;font-family:'Liberation Sans';font-size:52.33px;font-weight:normal;font-style:normal;color:#1a0000;transform:scaleX(0.9593);transform-origin:0 0;">-24.67</span>
<span style="left:63.0px;top:1177.5px;font-family:'Liberation Sans';font-size:52.33px;font-weight:normal;font-style:normal;color:#111;transform:scaleX(0.9454);transform-origin:0 0;">PSI Based</span>
<div style="left:311px;top:1167px;width:207px;height:90px;border-style:solid;border-width:13px 10px 9px 13px;border-color:#acacac #cbcbcb #cdcdcd #b0b0b0;"></div>
<div style="left:324px;top:1180px;width:184px;height:68px;background:#fff;"></div>
<span style="left:352.0px;top:1187.5px;font-family:'Liberation Sans';font-size:52.33px;font-weight:normal;font-style:normal;color:#111;transform:scaleX(0.9412);transform-origin:0 0;">52.59</span>
<div style="left:523px;top:1167px;width:207px;height:90px;border-style:solid;border-width:13px 10px 9px 13px;border-color:#acacac #cbcbcb #cdcdcd #b0b0b0;"></div>
<div style="left:536px;top:1180px;width:184px;height:68px;background:#fff;"></div>
<span style="left:563.5px;top:1187.5px;font-family:'Liberation Sans';font-size:52.33px;font-weight:normal;font-style:normal;color:#111;transform:scaleX(0.9451);transform-origin:0 0;">66.21</span>
<div style="left:734px;top:1167px;width:209px;height:90px;border-style:solid;border-width:13px 10px 9px 13px;border-color:#acacac #cbcbcb #cdcdcd #b0b0b0;"></div>
<div style="left:747px;top:1180px;width:186px;height:68px;background:#f24848;"></div>
<span style="left:766.0px;top:1187.5px;font-family:'Liberation Sans';font-size:52.33px;font-weight:normal;font-style:normal;color:#1a0000;transform:scaleX(0.9558);transform-origin:0 0;">-20.58</span>
<span style="left:214.0px;top:1266.5px;font-family:'Liberation Sans';font-size:52.33px;font-weight:normal;font-style:normal;color:#111;transform:scaleX(0.9591);transform-origin:0 0;">Expected Compression</span>
<div style="left:216px;top:1316px;width:516px;height:3px;background:#141414;"></div>
<span style="left:354.0px;top:1322.5px;font-family:'Liberation Sans';font-size:52.33px;font-weight:normal;font-style:normal;color:#111;transform:scaleX(0.8933);transform-origin:0 0;">Actual</span>
<span style="left:558.0px;top:1322.5px;font-family:'Liberation Sans';font-size:52.33px;font-weight:normal;font-style:normal;color:#111;transform:scaleX(0.9827);transform-origin:0 0;">Target</span>
<span style="left:773.5px;top:1322.5px;font-family:'Liberation Sans';font-size:52.33px;font-weight:normal;font-style:normal;color:#111;transform:scaleX(0.9260);transform-origin:0 0;">% Diff</span>
<span style="left:95.5px;top:1397.5px;font-family:'Liberation Sans';font-size:52.33px;font-weight:normal;font-style:normal;color:#111;transform:scaleX(0.9615);transform-origin:0 0;">Cranking</span>
<span style="left:40.3px;top:1489.5px;font-family:'Liberation Sans';font-size:52.33px;font-weight:normal;font-style:normal;color:#111;transform:scaleX(0.8125);transform-origin:0 0;">Snap Throttle</span>
<span style="left:118.1px;top:1584.5px;font-family:'Liberation Sans';font-size:52.33px;font-weight:normal;font-style:normal;color:#111;transform:scaleX(0.9406);transform-origin:0 0;">Exhaust</span>
<div style="left:311px;top:1383px;width:207px;height:90px;border-style:solid;border-width:13px 10px 9px 13px;border-color:#acacac #cbcbcb #cdcdcd #b0b0b0;"></div>
<div style="left:324px;top:1396px;width:184px;height:68px;background:#dcdcdc;"></div>
<span style="left:365.6px;top:1404.3px;font-family:'Liberation Sans';font-size:50.87px;font-weight:normal;font-style:normal;color:#dcdcdc;transform:scaleX(0.9305);transform-origin:0 0;-webkit-text-stroke:2px #404040;">0.00</span>
<div style="left:523px;top:1383px;width:207px;height:90px;border-style:solid;border-width:13px 10px 9px 13px;border-color:#acacac #cbcbcb #cdcdcd #b0b0b0;"></div>
<div style="left:536px;top:1396px;width:184px;height:68px;background:#dcdcdc;"></div>
<span style="left:577.6px;top:1404.3px;font-family:'Liberation Sans';font-size:50.87px;font-weight:normal;font-style:normal;color:#dcdcdc;transform:scaleX(0.9305);transform-origin:0 0;-webkit-text-stroke:2px #404040;">0.00</span>
<div style="left:734px;top:1383px;width:208px;height:90px;border-style:solid;border-width:13px 10px 9px 13px;border-color:#acacac #cbcbcb #cdcdcd #b0b0b0;"></div>
<div style="left:747px;top:1396px;width:185px;height:68px;background:#dcdcdc;"></div>
<span style="left:788.6px;top:1404.3px;font-family:'Liberation Sans';font-size:50.87px;font-weight:normal;font-style:normal;color:#dcdcdc;transform:scaleX(0.9305);transform-origin:0 0;-webkit-text-stroke:2px #404040;">0.00</span>
<div style="left:311px;top:1474px;width:207px;height:91px;border-style:solid;border-width:13px 10px 9px 13px;border-color:#acacac #cbcbcb #cdcdcd #b0b0b0;"></div>
<div style="left:324px;top:1487px;width:184px;height:69px;background:#dcdcdc;"></div>
<span style="left:365.6px;top:1495.8px;font-family:'Liberation Sans';font-size:50.87px;font-weight:normal;font-style:normal;color:#dcdcdc;transform:scaleX(0.9305);transform-origin:0 0;-webkit-text-stroke:2px #404040;">0.00</span>
<div style="left:523px;top:1474px;width:207px;height:91px;border-style:solid;border-width:13px 10px 9px 13px;border-color:#acacac #cbcbcb #cdcdcd #b0b0b0;"></div>
<div style="left:536px;top:1487px;width:184px;height:69px;background:#dcdcdc;"></div>
<span style="left:577.6px;top:1495.8px;font-family:'Liberation Sans';font-size:50.87px;font-weight:normal;font-style:normal;color:#dcdcdc;transform:scaleX(0.9305);transform-origin:0 0;-webkit-text-stroke:2px #404040;">0.00</span>
<div style="left:734px;top:1474px;width:208px;height:91px;border-style:solid;border-width:13px 10px 9px 13px;border-color:#acacac #cbcbcb #cdcdcd #b0b0b0;"></div>
<div style="left:747px;top:1487px;width:185px;height:69px;background:#dcdcdc;"></div>
<span style="left:788.6px;top:1495.8px;font-family:'Liberation Sans';font-size:50.87px;font-weight:normal;font-style:normal;color:#dcdcdc;transform:scaleX(0.9305);transform-origin:0 0;-webkit-text-stroke:2px #404040;">0.00</span>
<div style="left:311px;top:1570px;width:207px;height:91px;border-style:solid;border-width:13px 10px 9px 13px;border-color:#acacac #cbcbcb #cdcdcd #b0b0b0;"></div>
<div style="left:324px;top:1583px;width:184px;height:69px;background:#dcdcdc;"></div>
<span style="left:365.6px;top:1591.8px;font-family:'Liberation Sans';font-size:50.87px;font-weight:normal;font-style:normal;color:#dcdcdc;transform:scaleX(0.9305);transform-origin:0 0;-webkit-text-stroke:2px #404040;">0.00</span>
<span style="left:526.0px;top:1584.5px;font-family:'Liberation Sans';font-size:52.33px;font-weight:normal;font-style:normal;color:#111;transform:scaleX(0.9516);transform-origin:0 0;">Back Pressure</span>
<span style="left:37.0px;top:1698.5px;font-family:'Liberation Sans';font-size:52.33px;font-weight:normal;font-style:normal;color:#111;transform:scaleX(0.9633);transform-origin:0 0;">Vacuum</span>
<div style="left:35px;top:1748px;width:182px;height:3px;background:#141414;"></div>
<span style="left:289.6px;top:1700.5px;font-family:'Liberation Sans';font-size:52.33px;font-weight:normal;font-style:normal;color:#111;transform:scaleX(0.9360);transform-origin:0 0;">Intake Manifold</span>
<div style="left:630px;top:1687px;width:209px;height:89px;border-style:solid;border-width:13px 10px 9px 13px;border-color:#acacac #cbcbcb #cdcdcd #b0b0b0;"></div>
<div style="left:643px;top:1700px;width:186px;height:67px;background:#fff;"></div>
<span style="left:673.1px;top:1707.0px;font-family:'Liberation Sans';font-size:52.33px;font-weight:normal;font-style:normal;color:#111;transform:scaleX(0.9254);transform-origin:0 0;">51.62</span>
<span style="left:843.7px;top:1698.5px;font-family:'Liberation Sans';font-size:52.33px;font-weight:normal;font-style:normal;color:#111;transform:scaleX(1.0374);transform-origin:0 0;">Hg</span>
<span style="left:385.6px;top:1789.5px;font-family:'Liberation Sans';font-size:52.33px;font-weight:normal;font-style:normal;color:#111;transform:scaleX(0.9358);transform-origin:0 0;">In Cylinder</span>
<div style="left:630px;top:1774px;width:209px;height:91px;border-style:solid;border-width:13px 10px 9px 13px;border-color:#acacac #cbcbcb #cdcdcd #b0b0b0;"></div>
<div style="left:643px;top:1787px;width:186px;height:69px;background:#fff;"></div>
<span style="left:671.6px;top:1795.0px;font-family:'Liberation Sans';font-size:52.33px;font-weight:normal;font-style:normal;color:#111;transform:scaleX(0.9331);transform-origin:0 0;">15.73</span>
<span style="left:843.7px;top:1792.5px;font-family:'Liberation Sans';font-size:52.33px;font-weight:normal;font-style:normal;color:#111;transform:scaleX(1.0374);transform-origin:0 0;">Hg</span>
<span style="left:230.5px;top:1876.5px;font-family:'Liberation Sans';font-size:52.33px;font-weight:normal;font-style:normal;color:#111;transform:scaleX(0.9296);transform-origin:0 0;">% Diff from Target</span>
<div style="left:630px;top:1861px;width:209px;height:91px;border-style:solid;border-width:13px 10px 9px 13px;border-color:#acacac #cbcbcb #cdcdcd #b0b0b0;"></div>
<div style="left:643px;top:1874px;width:186px;height:69px;background:#f24848;"></div>
<span style="left:675.0px;top:1882.0px;font-family:'Liberation Sans';font-size:52.33px;font-weight:normal;font-style:normal;color:#1a0000;transform:scaleX(0.9455);transform-origin:0 0;">-69.5</span>
<div style="left:120px;top:1956px;width:713px;height:105px;border-style:solid;border-width:6px;border-color:#a8a8a8 #d2d2d2 #d4d4d4 #acacac;"></div>
<div style="left:126px;top:1962px;width:701px;height:93px;background:radial-gradient(ellipse 32% 30% at 25% 22%,rgba(255,200,200,.6),rgba(255,200,200,0) 100%),linear-gradient(165deg,#ff4c48 0%,#fb3a36 50%,#ec2a26 80%,#c81818 100%);"></div>
<span style="left:226.9px;top:1986.8px;font-family:'Liberation Sans';font-size:50.87px;font-weight:normal;font-style:normal;color:#220000;">Engine Vacuum HIGH</span>
<span style="left:333.4px;top:2083.5px;font-family:'Liberation Sans';font-size:52.33px;font-weight:normal;font-style:normal;color:#111;transform:scaleX(0.9934);transform-origin:0 0;">Conclusions</span>
<div style="left:334px;top:2133px;width:283px;height:3px;background:#141414;"></div>
<div style="left:19px;top:2145px;width:921px;height:306px;background:#9c9c9c;"></div>
<div style="left:47px;top:2172px;width:869px;height:252px;background:#fff;"></div>
<div style="left:843px;top:2180px;width:69px;height:238px;background:linear-gradient(90deg,#f2f2f2,#fafafa);"></div>
<svg style="left:860px;top:2196px" width="34" height="200" viewBox="0 0 34 200"><path d="M7 18 L17 6 L27 18 Z" fill="#333"/><path d="M7 182 L17 194 L27 182 Z" fill="#333"/></svg>
<span style="left:59.6px;top:2182.3px;font-family:'Liberation Sans';font-size:53.78px;font-weight:normal;font-style:normal;color:#111;transform:scaleX(0.9090);transform-origin:0 0;">Conclusions are not yet active.</span>
<div style="left:138px;top:2486px;width:704px;height:104px;background:linear-gradient(180deg,#dadada,#cfcfcf 50%,#c4c4c4);border:4px solid #1c1c1c;box-shadow:inset 6px 6px 0 #e6e6e6, inset -6px -6px 0 #a8a8a8;"></div>
<div style="left:138px;top:2586px;width:704px;height:102px;background:linear-gradient(180deg,#dadada,#cfcfcf 50%,#c4c4c4);border:4px solid #1c1c1c;box-shadow:inset 6px 6px 0 #e6e6e6, inset -6px -6px 0 #a8a8a8;"></div>
<span style="left:205.7px;top:2496.5px;font-family:'Liberation Sans';font-size:71.22px;font-weight:bold;font-style:normal;color:#0c44d8;transform:scaleX(0.9303);transform-origin:0 0;">Save Screen (F11)</span>
<span style="left:198.0px;top:2595.5px;font-family:'Liberation Sans';font-size:71.22px;font-weight:bold;font-style:normal;color:#0c44d8;transform:scaleX(0.9432);transform-origin:0 0;">Print Screen (F12)</span>
<div style="left:865px;top:2597px;width:70px;height:84px;background:linear-gradient(135deg,#fffff2,#f8f4d2);border:3px solid #1a1a1a;box-shadow:inset -4px -4px 0 #e4dfb0;"></div>
<span style="left:883.5px;top:2601.7px;font-family:'Liberation Sans';font-size:69.77px;font-weight:bold;font-style:normal;color:#0a3ad8;transform:scaleX(0.8821);transform-origin:0 0;">?</span>
<div style="left:988px;top:124px;width:71px;height:86px;background:linear-gradient(135deg,#fffff2,#f8f4d2);border:3px solid #1a1a1a;box-shadow:inset -4px -4px 0 #e4dfb0;"></div>
<span style="left:1004.3px;top:127.5px;font-family:'Liberation Sans';font-size:71.22px;font-weight:bold;font-style:normal;color:#0a3ad8;transform:scaleX(0.9451);transform-origin:0 0;">?</span>
<span style="left:1102.2px;top:226.5px;font-family:'Liberation Sans';font-size:52.33px;font-weight:normal;font-style:normal;color:#111;transform:scaleX(0.9131);transform-origin:0 0;">RPM Calc from CAM</span>
<div style="left:1547px;top:211px;width:208px;height:91px;border-style:solid;border-width:13px 10px 9px 13px;border-color:#acacac #cbcbcb #cdcdcd #b0b0b0;"></div>
<div style="left:1560px;top:224px;width:185px;height:69px;background:#fff;"></div>
<span style="left:1588.0px;top:232.0px;font-family:'Liberation Sans';font-size:52.33px;font-weight:normal;font-style:normal;color:#111;transform:scaleX(0.9373);transform-origin:0 0;">573.6</span>
<span style="left:1333.3px;top:318.5px;font-family:'Liberation Sans';font-size:52.33px;font-weight:normal;font-style:normal;color:#111;transform:scaleX(0.8895);transform-origin:0 0;">PSI@Max</span>
<div style="left:1547px;top:302px;width:208px;height:91px;border-style:solid;border-width:13px 10px 9px 13px;border-color:#acacac #cbcbcb #cdcdcd #b0b0b0;"></div>
<div style="left:1560px;top:315px;width:185px;height:69px;background:#fff;"></div>
<span style="left:1588.0px;top:323.0px;font-family:'Liberation Sans';font-size:52.33px;font-weight:normal;font-style:normal;color:#111;transform:scaleX(0.9412);transform-origin:0 0;">52.59</span>
<span style="left:1127.6px;top:405.5px;font-family:'Liberation Sans';font-size:52.33px;font-weight:normal;font-style:normal;color:#111;transform:scaleX(0.9260);transform-origin:0 0;">Cranking PSI &lt; 90PSI</span>
<div style="left:1612px;top:396px;width:72px;height:72px;border-radius:50%;background:radial-gradient(circle at 40% 40%,rgba(150,150,150,.45) 0%,rgba(150,150,150,.35) 60%,rgba(150,150,150,0) 74%);"></div>
<div style="left:1619px;top:403px;width:66px;height:66px;border-radius:50%;background:radial-gradient(circle at 62% 62%,#f4f4f4 0%,#ececec 55%,rgba(236,236,236,0) 72%);"></div>
<div style="left:1618px;top:402px;width:60px;height:60px;border-radius:50%;background:radial-gradient(circle at 36% 30%,#a8ff80 0%,#78f434 18%,#66e622 55%,#44b810 100%);"></div>
<span style="left:1245.7px;top:480.5px;font-family:'Liberation Sans';font-size:52.33px;font-weight:normal;font-style:normal;color:#111;transform:scaleX(0.9199);transform-origin:0 0;">Idle PSI &lt; 43PSI</span>
<div style="left:1612px;top:472px;width:72px;height:72px;border-radius:50%;background:radial-gradient(circle at 40% 40%,rgba(150,150,150,.45) 0%,rgba(150,150,150,.35) 60%,rgba(150,150,150,0) 74%);"></div>
<div style="left:1619px;top:479px;width:66px;height:66px;border-radius:50%;background:radial-gradient(circle at 62% 62%,#f4f4f4 0%,#ececec 55%,rgba(236,236,236,0) 72%);"></div>
<div style="left:1618px;top:478px;width:60px;height:60px;border-radius:50%;background:radial-gradient(circle at 36% 30%,#a8ff80 0%,#78f434 18%,#66e622 55%,#44b810 100%);"></div>
<span style="left:1226.2px;top:660.5px;font-family:'Liberation Sans';font-size:52.33px;font-weight:normal;font-style:normal;color:#111;transform:scaleX(0.9172);transform-origin:0 0;">DegLeftFWHM</span>
<div style="left:1547px;top:643px;width:208px;height:91px;border-style:solid;border-width:13px 10px 9px 13px;border-color:#acacac #cbcbcb #cdcdcd #b0b0b0;"></div>
<div style="left:1560px;top:656px;width:185px;height:69px;background:#fff;"></div>
<span style="left:1587.6px;top:664.0px;font-family:'Liberation Sans';font-size:52.33px;font-weight:normal;font-style:normal;color:#111;transform:scaleX(0.9213);transform-origin:0 0;">28.21</span>
<span style="left:1190.1px;top:750.5px;font-family:'Liberation Sans';font-size:52.33px;font-weight:normal;font-style:normal;color:#111;transform:scaleX(0.9280);transform-origin:0 0;">DegRightFWHM</span>
<div style="left:1547px;top:735px;width:208px;height:90px;border-style:solid;border-width:13px 10px 9px 13px;border-color:#acacac #cbcbcb #cdcdcd #b0b0b0;"></div>
<div style="left:1560px;top:748px;width:185px;height:68px;background:#fff;"></div>
<span style="left:1587.5px;top:755.5px;font-family:'Liberation Sans';font-size:52.33px;font-weight:normal;font-style:normal;color:#111;transform:scaleX(0.9491);transform-origin:0 0;">29.08</span>
<span style="left:1282.2px;top:841.5px;font-family:'Liberation Sans';font-size:52.33px;font-weight:normal;font-style:normal;color:#111;transform:scaleX(0.8984);transform-origin:0 0;">FWHM%Diff</span>
<div style="left:1547px;top:827px;width:208px;height:90px;border-style:solid;border-width:13px 10px 9px 13px;border-color:#acacac #cbcbcb #cdcdcd #b0b0b0;"></div>
<div style="left:1560px;top:840px;width:185px;height:68px;background:#fff;"></div>
<span style="left:1590.0px;top:847.5px;font-family:'Liberation Sans';font-size:52.33px;font-weight:normal;font-style:normal;color:#111;transform:scaleX(0.9368);transform-origin:0 0;">-3.08</span>
<span style="left:1175.2px;top:933.5px;font-family:'Liberation Sans';font-size:52.33px;font-weight:normal;font-style:normal;color:#111;transform:scaleX(0.9174);transform-origin:0 0;">FWHMError (&gt;20%)</span>
<div style="left:1612px;top:925px;width:72px;height:72px;border-radius:50%;background:radial-gradient(circle at 40% 40%,rgba(150,150,150,.45) 0%,rgba(150,150,150,.35) 60%,rgba(150,150,150,0) 74%);"></div>
<div style="left:1619px;top:932px;width:66px;height:66px;border-radius:50%;background:radial-gradient(circle at 62% 62%,#f4f4f4 0%,#ececec 55%,rgba(236,236,236,0) 72%);"></div>
<div style="left:1618px;top:931px;width:60px;height:60px;border-radius:50%;background:radial-gradient(circle at 36% 30%,#a8ff80 0%,#78f434 18%,#66e622 55%,#44b810 100%);"></div>
<span style="left:1102.1px;top:1048.5px;font-family:'Liberation Sans';font-size:52.33px;font-weight:normal;font-style:normal;color:#111;transform:scaleX(0.9394);transform-origin:0 0;">PSI@90 (CompFall)</span>
<div style="left:1547px;top:1036px;width:208px;height:89px;border-style:solid;border-width:13px 10px 9px 13px;border-color:#acacac #cbcbcb #cdcdcd #b0b0b0;"></div>
<div style="left:1560px;top:1049px;width:185px;height:67px;background:#fff;"></div>
<span style="left:1598.6px;top:1056.0px;font-family:'Liberation Sans';font-size:52.33px;font-weight:normal;font-style:normal;color:#111;transform:scaleX(0.9193);transform-origin:0 0;">2.67</span>
<span style="left:1246.2px;top:1133.5px;font-family:'Liberation Sans';font-size:52.33px;font-weight:normal;font-style:normal;color:#111;transform:scaleX(0.8998);transform-origin:0 0;">PSI@ExhMed</span>
<div style="left:1547px;top:1119px;width:208px;height:90px;border-style:solid;border-width:13px 10px 9px 13px;border-color:#acacac #cbcbcb #cdcdcd #b0b0b0;"></div>
<div style="left:1560px;top:1132px;width:185px;height:68px;background:#fff;"></div>
<span style="left:1599.0px;top:1139.5px;font-family:'Liberation Sans';font-size:52.33px;font-weight:normal;font-style:normal;color:#111;transform:scaleX(0.9349);transform-origin:0 0;">8.17</span>
<span style="left:1342.2px;top:1234.5px;font-family:'Liberation Sans';font-size:52.33px;font-weight:normal;font-style:normal;color:#111;transform:scaleX(0.9038);transform-origin:0 0;">PSI@Min</span>
<div style="left:1547px;top:1219px;width:208px;height:89px;border-style:solid;border-width:13px 10px 9px 13px;border-color:#acacac #cbcbcb #cdcdcd #b0b0b0;"></div>
<div style="left:1560px;top:1232px;width:185px;height:67px;background:#fff;"></div>
<span style="left:1600.5px;top:1239.0px;font-family:'Liberation Sans';font-size:52.33px;font-weight:normal;font-style:normal;color:#111;transform:scaleX(0.9250);transform-origin:0 0;">0.56</span>
<span style="left:1327.1px;top:1316.5px;font-family:'Liberation Sans';font-size:52.33px;font-weight:normal;font-style:normal;color:#111;transform:scaleX(0.9236);transform-origin:0 0;">Deg@Min</span>
<div style="left:1547px;top:1303px;width:208px;height:90px;border-style:solid;border-width:13px 10px 9px 13px;border-color:#acacac #cbcbcb #cdcdcd #b0b0b0;"></div>
<div style="left:1560px;top:1316px;width:185px;height:68px;background:#fff;"></div>
<span style="left:1571.5px;top:1323.5px;font-family:'Liberation Sans';font-size:52.33px;font-weight:normal;font-style:normal;color:#111;transform:scaleX(0.9483);transform-origin:0 0;">127.34</span>
<span style="left:991.1px;top:1401.5px;font-family:'Liberation Sans';font-size:52.33px;font-weight:normal;font-style:normal;color:#111;transform:scaleX(0.9297);transform-origin:0 0;">Deg from 142.5 ExhOpen</span>
<div style="left:1547px;top:1386px;width:208px;height:91px;border-style:solid;border-width:13px 10px 9px 13px;border-color:#acacac #cbcbcb #cdcdcd #b0b0b0;"></div>
<div style="left:1560px;top:1399px;width:185px;height:69px;background:#fff;"></div>
<span style="left:1578.0px;top:1407.0px;font-family:'Liberation Sans';font-size:52.33px;font-weight:normal;font-style:normal;color:#111;transform:scaleX(0.9419);transform-origin:0 0;">-15.16</span>
<span style="left:1137.1px;top:1488.5px;font-family:'Liberation Sans';font-size:52.33px;font-weight:normal;font-style:normal;color:#111;transform:scaleX(0.9412);transform-origin:0 0;">ExhOpenNot130-155</span>
<div style="left:1613px;top:1480px;width:72px;height:72px;border-radius:50%;background:radial-gradient(circle at 40% 40%,rgba(150,150,150,.45) 0%,rgba(150,150,150,.35) 60%,rgba(150,150,150,0) 74%);"></div>
<div style="left:1620px;top:1487px;width:66px;height:66px;border-radius:50%;background:radial-gradient(circle at 62% 62%,#f4f4f4 0%,#ececec 55%,rgba(236,236,236,0) 72%);"></div>
<div style="left:1619px;top:1486px;width:60px;height:60px;border-radius:50%;background:radial-gradient(circle at 36% 30%,#ffffa0 0%,#f8f21c 22%,#eee412 55%,#c0b008 100%);"></div>
<span style="left:1157.2px;top:1581.5px;font-family:'Liberation Sans';font-size:52.33px;font-weight:normal;font-style:normal;color:#111;transform:scaleX(0.9136);transform-origin:0 0;">DegRet/Adv (+ve=Retarded, -ve=Advanced)</span>
<div style="left:2098px;top:1567px;width:208px;height:89px;border-style:solid;border-width:13px 10px 9px 13px;border-color:#acacac #cbcbcb #cdcdcd #b0b0b0;"></div>
<div style="left:2111px;top:1580px;width:185px;height:67px;background:#fff;"></div>
<span style="left:2129.0px;top:1587.0px;font-family:'Liberation Sans';font-size:52.33px;font-weight:normal;font-style:normal;color:#111;transform:scaleX(0.9593);transform-origin:0 0;">-23.07</span>
<span style="left:1695.1px;top:1683.5px;font-family:'Liberation Sans';font-size:52.33px;font-weight:normal;font-style:normal;color:#111;transform:scaleX(0.9332);transform-origin:0 0;">Deg@MidExhRise</span>
<div style="left:2098px;top:1667px;width:208px;height:89px;border-style:solid;border-width:13px 10px 9px 13px;border-color:#acacac #cbcbcb #cdcdcd #b0b0b0;"></div>
<div style="left:2111px;top:1680px;width:185px;height:67px;background:#fff;"></div>
<span style="left:2121.4px;top:1687.0px;font-family:'Liberation Sans';font-size:52.33px;font-weight:normal;font-style:normal;color:#111;transform:scaleX(0.9709);transform-origin:0 0;">156.93</span>
<div style="left:2367px;top:1667px;width:207px;height:89px;border-style:solid;border-width:13px 10px 9px 13px;border-color:#acacac #cbcbcb #cdcdcd #b0b0b0;"></div>
<div style="left:2380px;top:1680px;width:184px;height:67px;background:#fff;"></div>
<span style="left:2420.0px;top:1687.0px;font-family:'Liberation Sans';font-size:52.33px;font-weight:normal;font-style:normal;color:#111;transform:scaleX(0.9402);transform-origin:0 0;">8.63</span>
<span style="left:2576.1px;top:1682.5px;font-family:'Liberation Sans';font-size:52.33px;font-weight:normal;font-style:normal;color:#111;transform:scaleX(0.9252);transform-origin:0 0;">PSI@360TDC</span>
<span style="left:1797.0px;top:1423.5px;font-family:'Liberation Sans';font-size:52.33px;font-weight:normal;font-style:normal;color:#111;transform:scaleX(0.9156);transform-origin:0 0;">Advanced (&lt;-19)</span>
<div style="left:2164px;top:1413px;width:72px;height:72px;border-radius:50%;background:radial-gradient(circle at 40% 40%,rgba(150,150,150,.45) 0%,rgba(150,150,150,.35) 60%,rgba(150,150,150,0) 74%);"></div>
<div style="left:2171px;top:1420px;width:66px;height:66px;border-radius:50%;background:radial-gradient(circle at 62% 62%,#f4f4f4 0%,#ececec 55%,rgba(236,236,236,0) 72%);"></div>
<div style="left:2170px;top:1419px;width:60px;height:60px;border-radius:50%;background:radial-gradient(circle at 36% 30%,#ff8a8a 0%,#f42020 20%,#ea1414 55%,#b80606 100%);"></div>
<span style="left:1791.1px;top:1500.5px;font-family:'Liberation Sans';font-size:52.33px;font-weight:normal;font-style:normal;color:#111;transform:scaleX(0.9416);transform-origin:0 0;">Retarded (&gt;+10)</span>
<div style="left:2164px;top:1489px;width:72px;height:72px;border-radius:50%;background:radial-gradient(circle at 40% 40%,rgba(150,150,150,.45) 0%,rgba(150,150,150,.35) 60%,rgba(150,150,150,0) 74%);"></div>
<div style="left:2171px;top:1496px;width:66px;height:66px;border-radius:50%;background:radial-gradient(circle at 62% 62%,#f4f4f4 0%,#ececec 55%,rgba(236,236,236,0) 72%);"></div>
<div style="left:2170px;top:1495px;width:60px;height:60px;border-radius:50%;background:radial-gradient(circle at 36% 30%,#a8ff80 0%,#78f434 18%,#66e622 55%,#44b810 100%);"></div>
<div style="left:2602px;top:1332px;width:208px;height:88px;border-style:solid;border-width:13px 10px 9px 13px;border-color:#acacac #cbcbcb #cdcdcd #b0b0b0;"></div>
<div style="left:2615px;top:1345px;width:185px;height:66px;background:#fff;"></div>
<span style="left:2628.5px;top:1351.5px;font-family:'Liberation Sans';font-size:52.33px;font-weight:normal;font-style:normal;color:#111;transform:scaleX(0.9612);transform-origin:0 0;">375.72</span>
<span style="left:2813.1px;top:1345.5px;font-family:'Liberation Sans';font-size:52.33px;font-weight:normal;font-style:normal;color:#111;transform:scaleX(0.9363);transform-origin:0 0;">Deg@MidIntakeFall</span>
<div style="left:2602px;top:1427px;width:208px;height:89px;border-style:solid;border-width:13px 10px 9px 13px;border-color:#acacac #cbcbcb #cdcdcd #b0b0b0;"></div>
<div style="left:2615px;top:1440px;width:185px;height:67px;background:#fff;"></div>
<span style="left:2648.0px;top:1447.0px;font-family:'Liberation Sans';font-size:52.33px;font-weight:normal;font-style:normal;color:#111;transform:scaleX(0.9368);transform-origin:0 0;">-4.28</span>
<span style="left:2813.1px;top:1440.5px;font-family:'Liberation Sans';font-size:52.33px;font-weight:normal;font-style:normal;color:#111;transform:scaleX(0.9369);transform-origin:0 0;">DegMidIntakeFall from TDC+20</span>
<div style="left:2668px;top:1524px;width:72px;height:72px;border-radius:50%;background:radial-gradient(circle at 40% 40%,rgba(150,150,150,.45) 0%,rgba(150,150,150,.35) 60%,rgba(150,150,150,0) 74%);"></div>
<div style="left:2675px;top:1531px;width:66px;height:66px;border-radius:50%;background:radial-gradient(circle at 62% 62%,#f4f4f4 0%,#ececec 55%,rgba(236,236,236,0) 72%);"></div>
<div style="left:2674px;top:1530px;width:60px;height:60px;border-radius:50%;background:radial-gradient(circle at 36% 30%,#a8ff80 0%,#78f434 18%,#66e622 55%,#44b810 100%);"></div>
<span style="left:2746.7px;top:1535.5px;font-family:'Liberation Sans';font-size:52.33px;font-weight:normal;font-style:normal;color:#111;transform:scaleX(0.9202);transform-origin:0 0;">Intake Advanced (&lt;-10)</span>
<div style="left:2668px;top:1600px;width:72px;height:72px;border-radius:50%;background:radial-gradient(circle at 40% 40%,rgba(150,150,150,.45) 0%,rgba(150,150,150,.35) 60%,rgba(150,150,150,0) 74%);"></div>
<div style="left:2675px;top:1607px;width:66px;height:66px;border-radius:50%;background:radial-gradient(circle at 62% 62%,#f4f4f4 0%,#ececec 55%,rgba(236,236,236,0) 72%);"></div>
<div style="left:2674px;top:1606px;width:60px;height:60px;border-radius:50%;background:radial-gradient(circle at 36% 30%,#a8ff80 0%,#78f434 18%,#66e622 55%,#44b810 100%);"></div>
<span style="left:2746.6px;top:1611.5px;font-family:'Liberation Sans';font-size:52.33px;font-weight:normal;font-style:normal;color:#111;transform:scaleX(0.9371);transform-origin:0 0;">Intake Retarded (&gt;+10)</span>
<div style="left:3373px;top:1573px;width:490px;height:141px;background:linear-gradient(180deg,#dcdcdc,#d0d0d0 50%,#c6c6c6);border:4px solid #1c1c1c;box-shadow:inset 10px 10px 0 #e4e4e4, inset -10px -10px 0 #a4a4a4;"></div>
<span style="left:3518.1px;top:1605.7px;font-family:'Liberation Sans';font-size:69.77px;font-weight:bold;font-style:normal;color:#0c44d8;transform:scaleX(0.9421);transform-origin:0 0;">Pause</span>
<div style="left:992px;top:1641px;width:647px;height:205px;background:#c6c6c6;border:4px solid #1a1a1a;"></div>
<div style="left:1473px;top:1642px;width:165px;height:90px;background:linear-gradient(180deg,#dadada,#cccccc);border:3px solid #1a1a1a;border-top:none;border-right:none;box-shadow:inset 5px 5px 0 #e6e6e6, inset -6px -6px 0 #a0a0a0;"></div>
<span style="left:1496.9px;top:1660.5px;font-family:'Liberation Sans';font-size:46.51px;font-weight:normal;font-style:normal;color:#1a4ad0;transform:scaleX(0.8925);transform-origin:0 0;">Check</span>
<div style="left:1001px;top:1641px;width:72px;height:72px;border-radius:50%;background:radial-gradient(circle at 40% 40%,rgba(150,150,150,.45) 0%,rgba(150,150,150,.35) 60%,rgba(150,150,150,0) 74%);"></div>
<div style="left:1008px;top:1648px;width:66px;height:66px;border-radius:50%;background:radial-gradient(circle at 62% 62%,#f4f4f4 0%,#ececec 55%,rgba(236,236,236,0) 72%);"></div>
<div style="left:1007px;top:1647px;width:60px;height:60px;border-radius:50%;background:radial-gradient(circle at 36% 30%,#a8ff80 0%,#78f434 18%,#66e622 55%,#44b810 100%);"></div>
<div style="left:1001px;top:1708px;width:72px;height:72px;border-radius:50%;background:radial-gradient(circle at 40% 40%,rgba(150,150,150,.45) 0%,rgba(150,150,150,.35) 60%,rgba(150,150,150,0) 74%);"></div>
<div style="left:1008px;top:1715px;width:66px;height:66px;border-radius:50%;background:radial-gradient(circle at 62% 62%,#f4f4f4 0%,#ececec 55%,rgba(236,236,236,0) 72%);"></div>
<div style="left:1007px;top:1714px;width:60px;height:60px;border-radius:50%;background:radial-gradient(circle at 36% 30%,#a8ff80 0%,#78f434 18%,#66e622 55%,#44b810 100%);"></div>
<div style="left:1001px;top:1776px;width:72px;height:72px;border-radius:50%;background:radial-gradient(circle at 40% 40%,rgba(150,150,150,.45) 0%,rgba(150,150,150,.35) 60%,rgba(150,150,150,0) 74%);"></div>
<div style="left:1008px;top:1783px;width:66px;height:66px;border-radius:50%;background:radial-gradient(circle at 62% 62%,#f4f4f4 0%,#ececec 55%,rgba(236,236,236,0) 72%);"></div>
<div style="left:1007px;top:1782px;width:60px;height:60px;border-radius:50%;background:radial-gradient(circle at 36% 30%,#a8ff80 0%,#78f434 18%,#66e622 55%,#44b810 100%);"></div>
<span style="left:1076.7px;top:1650.5px;font-family:'Liberation Sans';font-size:52.33px;font-weight:normal;font-style:normal;color:#111;transform:scaleX(0.8755);transform-origin:0 0;">Ch2 (Ig Pickup) OK</span>
<span style="left:1076.6px;top:1717.5px;font-family:'Liberation Sans';font-size:52.33px;font-weight:normal;font-style:normal;color:#111;transform:scaleX(0.8985);transform-origin:0 0;">Ch3 (Compr) OK</span>
<span style="left:1076.7px;top:1786.5px;font-family:'Liberation Sans';font-size:52.33px;font-weight:normal;font-style:normal;color:#111;transform:scaleX(0.8940);transform-origin:0 0;">Ch4 (Vacuum) OK</span>
<div style="left:1639px;top:1778px;width:2363px;height:4px;background:#707070;"></div>
<div style="left:1639px;top:1782px;width:2363px;height:3px;background:#e2e2e2;"></div>
<span style="left:1174.1px;top:1842.5px;font-family:'Liberation Sans';font-size:52.33px;font-weight:normal;font-style:normal;color:#111;transform:scaleX(0.9298);transform-origin:0 0;">(Below values only apply to live data)</span>
<span style="left:1179.1px;top:1941.5px;font-family:'Liberation Sans';font-size:52.33px;font-weight:normal;font-style:normal;color:#111;transform:scaleX(0.9235);transform-origin:0 0;">Snap RPM PSI Change</span>
<div style="left:1691px;top:1923px;width:208px;height:90px;border-style:solid;border-width:13px 10px 9px 13px;border-color:#acacac #cbcbcb #cdcdcd #b0b0b0;"></div>
<div style="left:1704px;top:1936px;width:185px;height:68px;background:#fff;"></div>
<span style="left:1745.5px;top:1943.5px;font-family:'Liberation Sans';font-size:52.33px;font-weight:normal;font-style:normal;color:#111;transform:scaleX(0.9250);transform-origin:0 0;">0.00</span>
<div style="left:1905px;top:1934px;width:72px;height:72px;border-radius:50%;background:radial-gradient(circle at 40% 40%,rgba(150,150,150,.45) 0%,rgba(150,150,150,.35) 60%,rgba(150,150,150,0) 74%);"></div>
<div style="left:1912px;top:1941px;width:66px;height:66px;border-radius:50%;background:radial-gradient(circle at 62% 62%,#f4f4f4 0%,#ececec 55%,rgba(236,236,236,0) 72%);"></div>
<div style="left:1911px;top:1940px;width:60px;height:60px;border-radius:50%;background:radial-gradient(circle at 36% 30%,#a8ff80 0%,#78f434 18%,#66e622 55%,#44b810 100%);"></div>
<span style="left:1229.1px;top:2063.5px;font-family:'Liberation Sans';font-size:52.33px;font-weight:normal;font-style:normal;color:#111;transform:scaleX(0.9268);transform-origin:0 0;">RPM Idle Variation %</span>
<div style="left:1691px;top:2043px;width:208px;height:90px;border-style:solid;border-width:13px 10px 9px 13px;border-color:#acacac #cbcbcb #cdcdcd #b0b0b0;"></div>
<div style="left:1704px;top:2056px;width:185px;height:68px;background:#fff;"></div>
<span style="left:1745.5px;top:2063.5px;font-family:'Liberation Sans';font-size:52.33px;font-weight:normal;font-style:normal;color:#111;transform:scaleX(0.9250);transform-origin:0 0;">0.00</span>
<div style="left:1905px;top:2054px;width:72px;height:72px;border-radius:50%;background:radial-gradient(circle at 40% 40%,rgba(150,150,150,.45) 0%,rgba(150,150,150,.35) 60%,rgba(150,150,150,0) 74%);"></div>
<div style="left:1912px;top:2061px;width:66px;height:66px;border-radius:50%;background:radial-gradient(circle at 62% 62%,#f4f4f4 0%,#ececec 55%,rgba(236,236,236,0) 72%);"></div>
<div style="left:1911px;top:2060px;width:60px;height:60px;border-radius:50%;background:radial-gradient(circle at 36% 30%,#a8ff80 0%,#78f434 18%,#66e622 55%,#44b810 100%);"></div>
<span style="left:1113.1px;top:2182.5px;font-family:'Liberation Sans';font-size:52.33px;font-weight:normal;font-style:normal;color:#111;transform:scaleX(0.9269);transform-origin:0 0;">RPM HIgh Idle Variation %</span>
<div style="left:1691px;top:2163px;width:208px;height:90px;border-style:solid;border-width:13px 10px 9px 13px;border-color:#acacac #cbcbcb #cdcdcd #b0b0b0;"></div>
<div style="left:1704px;top:2176px;width:185px;height:68px;background:#fff;"></div>
<span style="left:1745.5px;top:2183.5px;font-family:'Liberation Sans';font-size:52.33px;font-weight:normal;font-style:normal;color:#111;transform:scaleX(0.9250);transform-origin:0 0;">0.00</span>
<div style="left:1905px;top:2174px;width:72px;height:72px;border-radius:50%;background:radial-gradient(circle at 40% 40%,rgba(150,150,150,.45) 0%,rgba(150,150,150,.35) 60%,rgba(150,150,150,0) 74%);"></div>
<div style="left:1912px;top:2181px;width:66px;height:66px;border-radius:50%;background:radial-gradient(circle at 62% 62%,#f4f4f4 0%,#ececec 55%,rgba(236,236,236,0) 72%);"></div>
<div style="left:1911px;top:2180px;width:60px;height:60px;border-radius:50%;background:radial-gradient(circle at 36% 30%,#a8ff80 0%,#78f434 18%,#66e622 55%,#44b810 100%);"></div>
<span style="left:1257.5px;top:2302.5px;font-family:'Liberation Sans';font-size:52.33px;font-weight:normal;font-style:normal;color:#111;transform:scaleX(0.9587);transform-origin:0 0;">Ignition Timing Deg</span>
<div style="left:1691px;top:2283px;width:208px;height:90px;border-style:solid;border-width:13px 10px 9px 13px;border-color:#acacac #cbcbcb #cdcdcd #b0b0b0;"></div>
<div style="left:1704px;top:2296px;width:185px;height:68px;background:#fff;"></div>
<span style="left:1723.0px;top:2303.5px;font-family:'Liberation Sans';font-size:52.33px;font-weight:normal;font-style:normal;color:#111;transform:scaleX(0.9489);transform-origin:0 0;">-16.18</span>
<div style="left:1905px;top:2294px;width:72px;height:72px;border-radius:50%;background:radial-gradient(circle at 40% 40%,rgba(150,150,150,.45) 0%,rgba(150,150,150,.35) 60%,rgba(150,150,150,0) 74%);"></div>
<div style="left:1912px;top:2301px;width:66px;height:66px;border-radius:50%;background:radial-gradient(circle at 62% 62%,#f4f4f4 0%,#ececec 55%,rgba(236,236,236,0) 72%);"></div>
<div style="left:1911px;top:2300px;width:60px;height:60px;border-radius:50%;background:radial-gradient(circle at 36% 30%,#a8ff80 0%,#78f434 18%,#66e622 55%,#44b810 100%);"></div>
<span style="left:1008.1px;top:2421.5px;font-family:'Liberation Sans';font-size:52.33px;font-weight:normal;font-style:normal;color:#111;transform:scaleX(0.9309);transform-origin:0 0;">Exhaust Variation Mid Exh Rise</span>
<div style="left:1691px;top:2403px;width:208px;height:90px;border-style:solid;border-width:13px 10px 9px 13px;border-color:#acacac #cbcbcb #cdcdcd #b0b0b0;"></div>
<div style="left:1704px;top:2416px;width:185px;height:68px;background:#fff;"></div>
<span style="left:1745.5px;top:2423.5px;font-family:'Liberation Sans';font-size:52.33px;font-weight:normal;font-style:normal;color:#111;transform:scaleX(0.9250);transform-origin:0 0;">0.00</span>
<div style="left:1905px;top:2414px;width:72px;height:72px;border-radius:50%;background:radial-gradient(circle at 40% 40%,rgba(150,150,150,.45) 0%,rgba(150,150,150,.35) 60%,rgba(150,150,150,0) 74%);"></div>
<div style="left:1912px;top:2421px;width:66px;height:66px;border-radius:50%;background:radial-gradient(circle at 62% 62%,#f4f4f4 0%,#ececec 55%,rgba(236,236,236,0) 72%);"></div>
<div style="left:1911px;top:2420px;width:60px;height:60px;border-radius:50%;background:radial-gradient(circle at 36% 30%,#a8ff80 0%,#78f434 18%,#66e622 55%,#44b810 100%);"></div>
<span style="left:1034.1px;top:2546.5px;font-family:'Liberation Sans';font-size:52.33px;font-weight:normal;font-style:normal;color:#111;transform:scaleX(0.9227);transform-origin:0 0;">Exhaust Variation Mid Exh Fall</span>
<div style="left:1691px;top:2527px;width:208px;height:91px;border-style:solid;border-width:13px 10px 9px 13px;border-color:#acacac #cbcbcb #cdcdcd #b0b0b0;"></div>
<div style="left:1704px;top:2540px;width:185px;height:69px;background:#fff;"></div>
<span style="left:1745.5px;top:2548.0px;font-family:'Liberation Sans';font-size:52.33px;font-weight:normal;font-style:normal;color:#111;transform:scaleX(0.9250);transform-origin:0 0;">0.00</span>
<div style="left:1905px;top:2538px;width:72px;height:72px;border-radius:50%;background:radial-gradient(circle at 40% 40%,rgba(150,150,150,.45) 0%,rgba(150,150,150,.35) 60%,rgba(150,150,150,0) 74%);"></div>
<div style="left:1912px;top:2545px;width:66px;height:66px;border-radius:50%;background:radial-gradient(circle at 62% 62%,#f4f4f4 0%,#ececec 55%,rgba(236,236,236,0) 72%);"></div>
<div style="left:1911px;top:2544px;width:60px;height:60px;border-radius:50%;background:radial-gradient(circle at 36% 30%,#a8ff80 0%,#78f434 18%,#66e622 55%,#44b810 100%);"></div>
</body></html>
